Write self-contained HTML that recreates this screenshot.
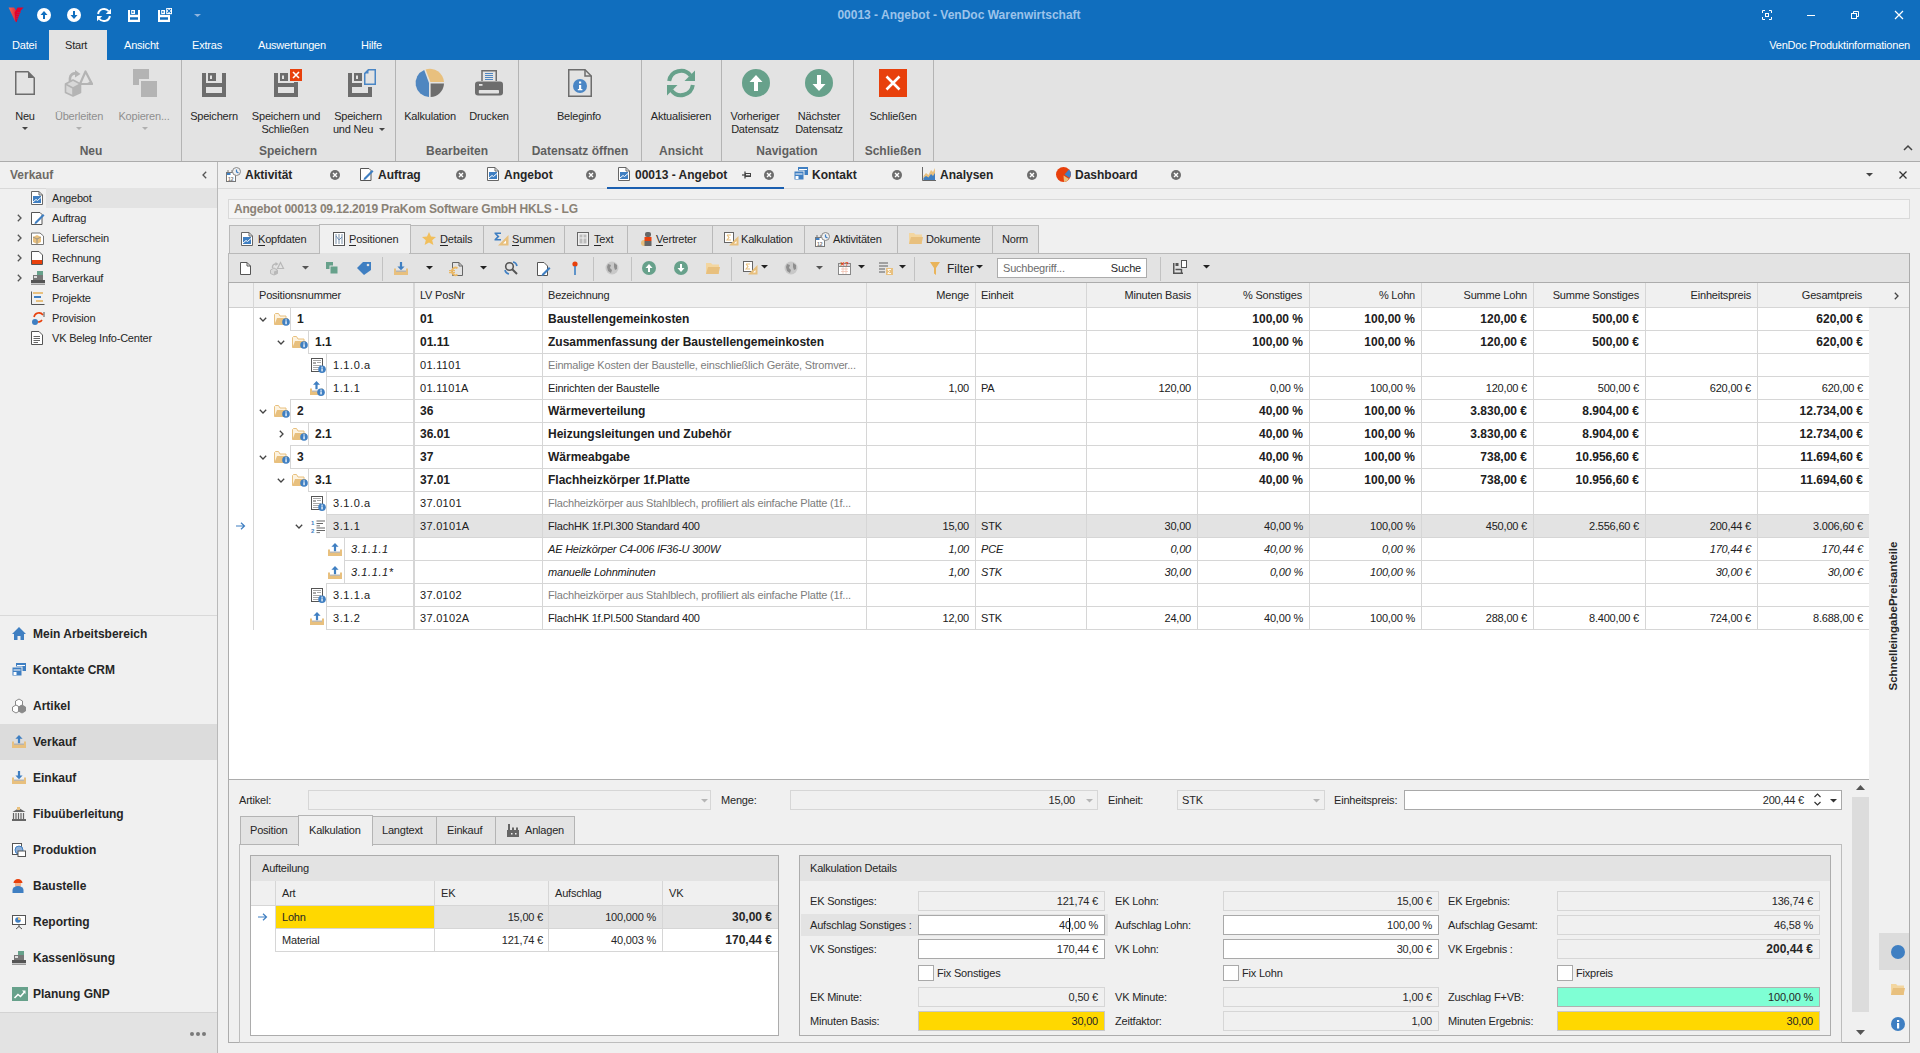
<!DOCTYPE html>
<html><head><meta charset="utf-8"><title>VenDoc</title>
<style>
html,body{margin:0;padding:0}
body{width:1920px;height:1053px;position:relative;overflow:hidden;background:#f0f0f0;font-family:"Liberation Sans",sans-serif;font-size:11px;color:#202020}
.a{position:absolute}
.t{position:absolute;white-space:nowrap}
svg{overflow:visible}
</style></head><body>
<div class="a" style="left:0px;top:0px;width:1920px;height:60px;background:#106ebe;"></div>
<svg class="a" style="left:0px;top:0px" width="30" height="30" viewBox="0 0 30 30"><defs><linearGradient id="vg" x1="0" y1="0" x2="1" y2="0"><stop offset="0" stop-color="#f26a55"/><stop offset="1" stop-color="#e2283a"/></linearGradient></defs><path d="M8.6 7.6 L14.2 7.4 L16.2 11.2 L15.5 22.2 Z" fill="url(#vg)"/><path d="M17.6 7.6 L23.6 7.6 L20.8 10.6 L16.5 22.2 L15.6 21.5 L14.6 12.5 Z" fill="#e4002b"/><path d="M17 12.5 H21 M16.5 14.5 H20 M16 16.5 H19 M15.8 18.5 H18.3" stroke="#b0245a" stroke-width="0.8"/></svg>
<svg class="a" style="left:37px;top:8px" width="14" height="14" viewBox="0 0 14 14"><circle cx="7" cy="7" r="7" fill="#fff"/><path d="M7 3 L10.5 7 L8 7 L8 11 L6 11 L6 7 L3.5 7 Z" fill="#106ebe"/></svg>
<svg class="a" style="left:67px;top:8px" width="14" height="14" viewBox="0 0 14 14"><circle cx="7" cy="7" r="7" fill="#fff"/><path d="M7 11 L10.5 7 L8 7 L8 3 L6 3 L6 7 L3.5 7 Z" fill="#106ebe"/></svg>
<svg class="a" style="left:97px;top:8px" width="14" height="14" viewBox="0 0 14 14"><path d="M1.1 6 A6 6 0 0 1 11.75 3.25" stroke="#fff" stroke-width="2" fill="none"/><path d="M8.75 6 L14 6 L14 0.75 Z" fill="#fff"/><path d="M12.9 8 A6 6 0 0 1 2.25 10.75" stroke="#fff" stroke-width="2" fill="none"/><path d="M5.25 8 L0 8 L0 13.25 Z" fill="#fff"/></svg>
<svg class="a" style="left:128px;top:10px" width="12" height="12" viewBox="0 0 12 12"><path d="M0 0 H2 V4.7 H10 V0 H12 V12 H0 Z M2 7.2 V9.8 H10 V7.2 Z" fill="#fff" fill-rule="evenodd"/><path d="M3.2 0 H7 V4 H3.2 Z M4.3 1 V3 H5.5 V1 Z" fill="#fff" fill-rule="evenodd"/></svg>
<svg class="a" style="left:158px;top:8px" width="15" height="14" viewBox="0 0 15 14"><g transform="translate(0,2)"><path d="M0 0 H2 V4.7 H10 V0 H12 V12 H0 Z M2 7.2 V9.8 H10 V7.2 Z" fill="#fff" fill-rule="evenodd"/><path d="M3.2 0 H7 V4 H3.2 Z M4.3 1 V3 H5.5 V1 Z" fill="#fff" fill-rule="evenodd"/></g><rect x="7.2" y="-0.5" width="7.5" height="7.5" fill="#106ebe"/><rect x="8.2" y="0" width="5.8" height="6.2" fill="#fff"/><path d="M9.4 1.2 L12.8 4.8 M12.8 1.2 L9.4 4.8" stroke="#106ebe" stroke-width="1.1"/></svg>
<svg class="a" style="left:194px;top:14px" width="7" height="3" viewBox="0 0 7 3"><path d="M0 0 H7 L3.5 3 Z" fill="#8db4de"/></svg>
<div class="t" style="top:7.84px;font-size:12px;line-height:14px;left:659px;width:600px;text-align:center;font-weight:bold;color:#9cc3ea;letter-spacing:0px;">00013 - Angebot - VenDoc Warenwirtschaft</div>
<svg class="a" style="left:1762px;top:10px" width="10" height="10" viewBox="0 0 10 10"><path d="M0.5 3 V0.5 H3 M7 0.5 H9.5 V3 M9.5 7 V9.5 H7 M3 9.5 H0.5 V7" stroke="#fff" fill="none"/><rect x="3.5" y="3.5" width="3" height="3" stroke="#fff" fill="none"/></svg>
<div class="a" style="left:1807px;top:15px;width:8px;height:1px;background:#fff"></div>
<svg class="a" style="left:1851px;top:11px" width="8" height="8" viewBox="0 0 8 8"><rect x="0.5" y="2.5" width="5" height="5" stroke="#fff" fill="none"/><path d="M2.5 2.5 V0.5 H7.5 V5.5 H5.5" stroke="#fff" fill="none"/></svg>
<svg class="a" style="left:1895px;top:11px" width="8" height="8" viewBox="0 0 8 8"><path d="M0 0 L8 8 M8 0 L0 8" stroke="#fff" stroke-width="1.2"/></svg>
<div class="a" style="left:49px;top:30px;width:58px;height:30px;background:#e3e3e3;"></div>
<div class="t" style="top:38.69px;font-size:11px;line-height:13px;left:12px;color:#fff;letter-spacing:-0.2px;">Datei</div>
<div class="t" style="top:38.69px;font-size:11px;line-height:13px;left:65px;color:#262626;letter-spacing:-0.2px;">Start</div>
<div class="t" style="top:38.69px;font-size:11px;line-height:13px;left:124px;color:#fff;letter-spacing:-0.2px;">Ansicht</div>
<div class="t" style="top:38.69px;font-size:11px;line-height:13px;left:192px;color:#fff;letter-spacing:-0.2px;">Extras</div>
<div class="t" style="top:38.69px;font-size:11px;line-height:13px;left:258px;color:#fff;letter-spacing:-0.2px;">Auswertungen</div>
<div class="t" style="top:38.69px;font-size:11px;line-height:13px;left:361px;color:#fff;letter-spacing:-0.2px;">Hilfe</div>
<div class="t" style="top:38.69px;font-size:11px;line-height:13px;right:10px;color:#fff;letter-spacing:-0.2px;">VenDoc Produktinformationen</div>
<div class="a" style="left:0px;top:60px;width:1920px;height:101px;background:#e3e3e3;"></div>
<div class="a" style="left:0px;top:161px;width:1920px;height:1px;background:#acacac"></div>
<div class="a" style="left:181px;top:60px;width:1px;height:101px;background:#b4b4b4"></div>
<div class="a" style="left:395px;top:60px;width:1px;height:101px;background:#b4b4b4"></div>
<div class="a" style="left:518px;top:60px;width:1px;height:101px;background:#b4b4b4"></div>
<div class="a" style="left:641px;top:60px;width:1px;height:101px;background:#b4b4b4"></div>
<div class="a" style="left:721px;top:60px;width:1px;height:101px;background:#b4b4b4"></div>
<div class="a" style="left:853px;top:60px;width:1px;height:101px;background:#b4b4b4"></div>
<div class="a" style="left:933px;top:60px;width:1px;height:101px;background:#b4b4b4"></div>
<svg class="a" style="left:15px;top:71px" width="20" height="24" viewBox="0 0 20 24"><path d="M0.75 0.75 H13 L19.25 7 V23.25 H0.75 Z" fill="none" stroke="#6d6d6d" stroke-width="1.5"/><path d="M13 0.75 V7 H19.25 Z" fill="#6d6d6d"/></svg>
<div class="t" style="top:109.69px;font-size:11px;line-height:13px;left:-275px;width:600px;text-align:center;color:#262626;letter-spacing:-0.2px;">Neu</div>
<svg class="a" style="left:22px;top:127px" width="6" height="3" viewBox="0 0 6 3"><path d="M0 0 H6 L3 3 Z" fill="#444"/></svg>
<svg class="a" style="left:65px;top:70px" width="28" height="26" viewBox="0 0 28 26"><path d="M8 10 L15.5 14 V22.5 L8 26 L0.5 22.5 V14 Z" fill="#d8d8d8" stroke="#b4b4b4" stroke-width="1.6" stroke-linejoin="round"/><path d="M0.8 14.2 L8 18 L15.2 14.2 M8 18 V25.5" stroke="#b4b4b4" stroke-width="1.6" fill="none"/><path d="M8 18 L15.2 14.2 V22.3 L8 25.7 Z" fill="#b4b4b4"/><path d="M20.5 1.5 L27 14 H15 Z" fill="#e3e3e3" stroke="#b4b4b4" stroke-width="2.2" stroke-linejoin="round"/><path d="M19 14.5 H28 L26.5 11 Z" fill="#b4b4b4"/><path d="M5 11.5 V8 A5 5 0 0 1 11 3.5" stroke="#b4b4b4" stroke-width="2.6" fill="none"/><path d="M10 0 L15.5 4 L10 7.5 Z" fill="#b4b4b4"/></svg>
<div class="t" style="top:109.69px;font-size:11px;line-height:13px;left:-221px;width:600px;text-align:center;color:#8f8f8f;letter-spacing:-0.2px;">Überleiten</div>
<svg class="a" style="left:76px;top:127px" width="6" height="3" viewBox="0 0 6 3"><path d="M0 0 H6 L3 3 Z" fill="#b0b0b0"/></svg>
<div class="a" style="left:133px;top:69px;width:16px;height:16px;background:#b4b4b4;"></div>
<div class="a" style="left:139px;top:79px;width:18px;height:18px;background:#e3e3e3;"></div>
<div class="a" style="left:141px;top:81px;width:16px;height:16px;background:#b4b4b4;"></div>
<div class="t" style="top:109.69px;font-size:11px;line-height:13px;left:-156px;width:600px;text-align:center;color:#8f8f8f;letter-spacing:-0.2px;">Kopieren...</div>
<svg class="a" style="left:142px;top:127px" width="6" height="3" viewBox="0 0 6 3"><path d="M0 0 H6 L3 3 Z" fill="#b0b0b0"/></svg>
<div class="t" style="top:143.84px;font-size:12px;line-height:14px;left:-209px;width:600px;text-align:center;font-weight:bold;color:#5f5f5f;letter-spacing:0px;">Neu</div>
<svg class="a" style="left:202px;top:73px" width="24" height="24" viewBox="0 0 24 24"><path d="M0 0 H4 V10 H20 V0 H24 V24 H0 Z M4 14 V20 H20 V14 Z" fill="#6d6d6d" fill-rule="evenodd"/><path d="M6 0 H14 V8 H6 Z M8 2.5 V6 H10 V2.5 Z" fill="#6d6d6d" fill-rule="evenodd"/></svg>
<div class="t" style="top:109.69px;font-size:11px;line-height:13px;left:-86px;width:600px;text-align:center;color:#262626;letter-spacing:-0.2px;">Speichern</div>
<svg class="a" style="left:274px;top:69px" width="30" height="28" viewBox="0 0 30 28"><g transform="translate(0,4)"><path d="M0 0 H4 V10 H20 V0 H24 V24 H0 Z M4 14 V20 H20 V14 Z" fill="#6d6d6d" fill-rule="evenodd"/><path d="M6 0 H14 V8 H6 Z M8 2.5 V6 H10 V2.5 Z" fill="#6d6d6d" fill-rule="evenodd"/></g><rect x="15" y="-1" width="14" height="14" fill="#e3e3e3"/><rect x="16" y="0" width="12" height="12" fill="#e8400c"/><path d="M19 3 L25 9 M25 3 L19 9" stroke="#fff" stroke-width="1.6"/></svg>
<div class="t" style="top:109.69px;font-size:11px;line-height:13px;left:-14px;width:600px;text-align:center;color:#262626;letter-spacing:-0.2px;">Speichern und</div>
<div class="t" style="top:122.69px;font-size:11px;line-height:13px;left:-15px;width:600px;text-align:center;color:#262626;letter-spacing:-0.2px;">Schließen</div>
<svg class="a" style="left:348px;top:69px" width="30" height="28" viewBox="0 0 30 28"><path d="M0 4 H4 V14 H14 V18 H4 V24 H20 V18 H24 V28 H0 Z" fill="#6d6d6d"/><path d="M6 4 H14 V12 H6 Z M8 6.5 V10 H10 V6.5 Z" fill="#6d6d6d" fill-rule="evenodd"/><path d="M16.75 4.5 L20.5 0.75 H27.25 V15.25 H16.75 Z" fill="#e3e3e3" stroke="#4a86c5" stroke-width="1.5"/><path d="M16 4.5 L20.5 0 V4.5 Z" fill="#4a86c5"/></svg>
<div class="t" style="top:109.69px;font-size:11px;line-height:13px;left:58px;width:600px;text-align:center;color:#262626;letter-spacing:-0.2px;">Speichern</div>
<div class="t" style="top:122.69px;font-size:11px;line-height:13px;left:53px;width:600px;text-align:center;color:#262626;letter-spacing:-0.2px;">und Neu</div>
<svg class="a" style="left:379px;top:128px" width="6" height="3" viewBox="0 0 6 3"><path d="M0 0 H6 L3 3 Z" fill="#444"/></svg>
<div class="t" style="top:143.84px;font-size:12px;line-height:14px;left:-12px;width:600px;text-align:center;font-weight:bold;color:#5f5f5f;letter-spacing:0px;">Speichern</div>
<svg class="a" style="left:416px;top:69px" width="28" height="28" viewBox="0 0 28 28"><path d="M13 28 L13 14 L8.2 1.1 A14 14 0 0 0 13 28 Z" fill="#4f86c0"/><path d="M9.6 0.5 A14 14 0 0 1 28 13 L14.4 13 Z" fill="#e8c07e"/><path d="M14.6 14.6 H28 A14 14 0 0 1 14.6 28 Z" fill="#6d6d6d"/></svg>
<div class="t" style="top:109.69px;font-size:11px;line-height:13px;left:130px;width:600px;text-align:center;color:#262626;letter-spacing:-0.2px;">Kalkulation</div>
<svg class="a" style="left:475px;top:70px" width="28" height="26" viewBox="0 0 28 26"><path d="M7 11 V0.75 H21.25 V11" fill="none" stroke="#6d6d6d" stroke-width="1.5"/><path d="M10 3.5 H18 M10 5.5 H18 M10 7.5 H18 M10 9.5 H18" stroke="#4f86c0" stroke-width="1"/><rect x="0" y="11.5" width="28" height="14" rx="3" fill="#6d6d6d"/><rect x="3.8" y="20" width="20.2" height="3.6" rx="0.8" fill="#e3e3e3"/><rect x="4" y="14" width="3.5" height="1.8" fill="#e3e3e3"/></svg>
<div class="t" style="top:109.69px;font-size:11px;line-height:13px;left:189px;width:600px;text-align:center;color:#262626;letter-spacing:-0.2px;">Drucken</div>
<div class="t" style="top:143.84px;font-size:12px;line-height:14px;left:157px;width:600px;text-align:center;font-weight:bold;color:#5f5f5f;letter-spacing:0px;">Bearbeiten</div>
<svg class="a" style="left:568px;top:69px" width="24" height="28" viewBox="0 0 24 28"><path d="M0.75 0.75 H17 L23.25 7 V27.25 H0.75 Z" fill="none" stroke="#6d6d6d" stroke-width="1.5"/><path d="M17 0.75 V7 H23.25" fill="none" stroke="#6d6d6d" stroke-width="1.5"/><circle cx="12" cy="17" r="7" fill="#4a86c5"/><rect x="11" y="16" width="2.2" height="5" fill="#fff"/><rect x="9.8" y="20" width="4.6" height="1.3" fill="#fff"/><rect x="11" y="12.5" width="2.2" height="2" fill="#fff"/></svg>
<div class="t" style="top:109.69px;font-size:11px;line-height:13px;left:279px;width:600px;text-align:center;color:#262626;letter-spacing:-0.2px;">Beleginfo</div>
<div class="t" style="top:143.84px;font-size:12px;line-height:14px;left:280px;width:600px;text-align:center;font-weight:bold;color:#5f5f5f;letter-spacing:0px;">Datensatz öffnen</div>
<svg class="a" style="left:667px;top:69px" width="28" height="28" viewBox="0 0 28 28"><path d="M2.17 12 A12 12 0 0 1 23.5 6.5" stroke="#67a18b" stroke-width="4" fill="none"/><path d="M17.5 12 L28 12 L28 1.5 Z" fill="#67a18b"/><path d="M25.83 16 A12 12 0 0 1 4.5 21.5" stroke="#67a18b" stroke-width="4" fill="none"/><path d="M10.5 16 L0 16 L0 26.5 Z" fill="#67a18b"/></svg>
<div class="t" style="top:109.69px;font-size:11px;line-height:13px;left:381px;width:600px;text-align:center;color:#262626;letter-spacing:-0.2px;">Aktualisieren</div>
<div class="t" style="top:143.84px;font-size:12px;line-height:14px;left:381px;width:600px;text-align:center;font-weight:bold;color:#5f5f5f;letter-spacing:0px;">Ansicht</div>
<svg class="a" style="left:742px;top:69px" width="28" height="28" viewBox="0 0 28 28"><circle cx="14" cy="14" r="14" fill="#67a18b"/><path d="M14 6 L20.5 13 H16 V22 H12 V13 H7.5 Z" fill="#fff"/></svg>
<svg class="a" style="left:805px;top:69px" width="28" height="28" viewBox="0 0 28 28"><circle cx="14" cy="14" r="14" fill="#67a18b"/><path d="M14 22 L20.5 15 H16 V6 H12 V15 H7.5 Z" fill="#fff"/></svg>
<div class="t" style="top:109.69px;font-size:11px;line-height:13px;left:455px;width:600px;text-align:center;color:#262626;letter-spacing:-0.2px;">Vorheriger</div>
<div class="t" style="top:122.69px;font-size:11px;line-height:13px;left:455px;width:600px;text-align:center;color:#262626;letter-spacing:-0.2px;">Datensatz</div>
<div class="t" style="top:109.69px;font-size:11px;line-height:13px;left:519px;width:600px;text-align:center;color:#262626;letter-spacing:-0.2px;">Nächster</div>
<div class="t" style="top:122.69px;font-size:11px;line-height:13px;left:519px;width:600px;text-align:center;color:#262626;letter-spacing:-0.2px;">Datensatz</div>
<div class="t" style="top:143.84px;font-size:12px;line-height:14px;left:487px;width:600px;text-align:center;font-weight:bold;color:#5f5f5f;letter-spacing:0px;">Navigation</div>
<svg class="a" style="left:879px;top:69px" width="28" height="28" viewBox="0 0 28 28"><rect width="28" height="28" fill="#e8400c"/><path d="M7.5 7.5 L20.5 20.5 M20.5 7.5 L7.5 20.5" stroke="#fff" stroke-width="2.6"/></svg>
<div class="t" style="top:109.69px;font-size:11px;line-height:13px;left:593px;width:600px;text-align:center;color:#262626;letter-spacing:-0.2px;">Schließen</div>
<div class="t" style="top:143.84px;font-size:12px;line-height:14px;left:593px;width:600px;text-align:center;font-weight:bold;color:#5f5f5f;letter-spacing:0px;">Schließen</div>
<svg class="a" style="left:1903px;top:145px" width="10" height="6" viewBox="0 0 10 6"><path d="M1 5 L5 1 L9 5" stroke="#444" stroke-width="1.5" fill="none"/></svg>
<div class="a" style="left:217px;top:162px;width:1px;height:891px;background:#b9b9b9"></div>
<div class="t" style="top:167.84px;font-size:12px;line-height:14px;left:10px;font-weight:bold;color:#6e6a66;letter-spacing:0px;">Verkauf</div>
<svg class="a" style="left:202px;top:171px" width="5" height="8" viewBox="0 0 5 8"><path d="M4.2 0.8 L1 4 L4.2 7.2" stroke="#555" stroke-width="1.3" fill="none"/></svg>
<div class="a" style="left:0px;top:188px;width:217px;height:1px;background:#d9d9d9"></div>
<div class="a" style="left:46px;top:188px;width:171px;height:20px;background:#e3e3e3;"></div>
<svg class="a" style="left:31px;top:191px" width="12" height="14" viewBox="0 0 12 14"><path d="M0.5 0.5 H8 L11.5 4 V13.5 H0.5 Z" fill="#fff" stroke="#666"/><path d="M8 0.5 V4 H11.5" fill="none" stroke="#666"/><rect x="2" y="5" width="8" height="7" fill="#3f7fc2"/><path d="M2 11 L5 8.5 L6.5 9.5 L10 6.5" stroke="#fff" stroke-width="1" fill="none"/></svg>
<div class="t" style="top:191.69px;font-size:11px;line-height:13px;left:52px;color:#262626;letter-spacing:-0.2px;">Angebot</div>
<svg class="a" style="left:31px;top:211px" width="14" height="14" viewBox="0 0 14 14"><path d="M0.5 1.5 H9 L11 3.5 V13.5 H0.5 Z" fill="#fff" stroke="#555"/><path d="M4 11 L12 3 L13.5 4.5 L5.5 12.5 L3.5 13 Z" fill="#3f7fc2"/></svg>
<svg class="a" style="left:17px;top:214px" width="5" height="8" viewBox="0 0 5 8"><path d="M0.8 0.8 L4 4 L0.8 7.2" stroke="#555" stroke-width="1.3" fill="none"/></svg>
<div class="t" style="top:211.69px;font-size:11px;line-height:13px;left:52px;color:#262626;letter-spacing:-0.2px;">Auftrag</div>
<svg class="a" style="left:31px;top:231px" width="13" height="14" viewBox="0 0 13 14"><path d="M0.5 2 H9 L12.5 5 V13.5 H0.5 Z" fill="#fff" stroke="#777"/><path d="M2 6 L6 4 L10 6 V11 L6 13 L2 11 Z" fill="#e8c07e"/><path d="M2 6 L6 8 L10 6 M6 8 V13" stroke="#888" stroke-width="0.8" fill="none"/></svg>
<svg class="a" style="left:17px;top:234px" width="5" height="8" viewBox="0 0 5 8"><path d="M0.8 0.8 L4 4 L0.8 7.2" stroke="#555" stroke-width="1.3" fill="none"/></svg>
<div class="t" style="top:231.69px;font-size:11px;line-height:13px;left:52px;color:#262626;letter-spacing:-0.2px;">Lieferschein</div>
<svg class="a" style="left:31px;top:251px" width="12" height="14" viewBox="0 0 12 14"><path d="M0.5 0.5 H8 L11.5 4 V13.5 H0.5 Z" fill="#fff" stroke="#555"/><rect x="1" y="9" width="10" height="4" fill="#e8400c"/></svg>
<svg class="a" style="left:17px;top:254px" width="5" height="8" viewBox="0 0 5 8"><path d="M0.8 0.8 L4 4 L0.8 7.2" stroke="#555" stroke-width="1.3" fill="none"/></svg>
<div class="t" style="top:251.69px;font-size:11px;line-height:13px;left:52px;color:#262626;letter-spacing:-0.2px;">Rechnung</div>
<svg class="a" style="left:31px;top:271px" width="14" height="14" viewBox="0 0 14 14"><rect x="6" y="0" width="6" height="5" fill="#67a18b"/><rect x="2" y="4" width="10" height="5" fill="#777"/><rect x="3" y="5" width="3" height="2" fill="#ddd"/><rect x="0" y="9" width="14" height="3" fill="#555"/><rect x="0" y="12.5" width="14" height="1.5" fill="#999"/></svg>
<svg class="a" style="left:17px;top:274px" width="5" height="8" viewBox="0 0 5 8"><path d="M0.8 0.8 L4 4 L0.8 7.2" stroke="#555" stroke-width="1.3" fill="none"/></svg>
<div class="t" style="top:271.69px;font-size:11px;line-height:13px;left:52px;color:#262626;letter-spacing:-0.2px;">Barverkauf</div>
<svg class="a" style="left:31px;top:291px" width="14" height="14" viewBox="0 0 14 14"><path d="M0.5 0.5 V13.5 H13.5" stroke="#555" fill="none"/><rect x="2" y="1" width="10" height="2" fill="#e8c07e"/><rect x="3" y="5" width="7" height="2" fill="#3f7fc2"/><rect x="5" y="9" width="7" height="2" fill="#e8c07e"/></svg>
<div class="t" style="top:291.69px;font-size:11px;line-height:13px;left:52px;color:#262626;letter-spacing:-0.2px;">Projekte</div>
<svg class="a" style="left:31px;top:311px" width="14" height="14" viewBox="0 0 14 14"><path d="M3 6 A5 5 0 0 1 12 4" stroke="#e8400c" stroke-width="1.6" fill="none"/><path d="M5 10 A4 4 0 0 0 11 9" stroke="#e8400c" stroke-width="1.6" fill="none"/><circle cx="4" cy="11" r="3" fill="#3f7fc2"/><path d="M13 1 V6" stroke="#555"/></svg>
<div class="t" style="top:311.69px;font-size:11px;line-height:13px;left:52px;color:#262626;letter-spacing:-0.2px;">Provision</div>
<svg class="a" style="left:31px;top:331px" width="12" height="14" viewBox="0 0 12 14"><path d="M0.5 0.5 H8 L11.5 4 V13.5 H0.5 Z" fill="#fff" stroke="#555"/><path d="M2.5 5.5 H9 M2.5 7.5 H9 M2.5 9.5 H9 M2.5 11.5 H7" stroke="#555" stroke-width="0.9"/></svg>
<div class="t" style="top:331.69px;font-size:11px;line-height:13px;left:52px;color:#262626;letter-spacing:-0.2px;">VK Beleg Info-Center</div>
<div class="a" style="left:0px;top:615px;width:217px;height:1px;background:#d9d9d9"></div>
<div class="a" style="left:0px;top:724px;width:217px;height:36px;background:#dcdcdc;"></div>
<svg class="a" style="left:12px;top:627px" width="14" height="13" viewBox="0 0 14 13"><path d="M7 0 L14 7 H12 V13 H8.5 V9 H5.5 V13 H2 V7 H0 Z" fill="#3f7fc2"/></svg>
<div class="t" style="top:626.84px;font-size:12px;line-height:14px;left:33px;font-weight:bold;color:#262626;letter-spacing:0px;">Mein Arbeitsbereich</div>
<svg class="a" style="left:12px;top:663px" width="14" height="13" viewBox="0 0 14 13"><rect x="4" y="0" width="10" height="8" fill="#3f7fc2"/><rect x="5" y="2" width="8" height="1" fill="#fff"/><rect x="0" y="4" width="10" height="9" fill="#3f7fc2" stroke="#f0f0f0" stroke-width="1"/><rect x="1.5" y="6.5" width="7" height="1" fill="#fff"/><rect x="1.5" y="9" width="3" height="3" fill="#fff"/></svg>
<div class="t" style="top:662.84px;font-size:12px;line-height:14px;left:33px;font-weight:bold;color:#262626;letter-spacing:0px;">Kontakte CRM</div>
<svg class="a" style="left:12px;top:699px" width="14" height="14" viewBox="0 0 14 14"><path d="M4 0 L7.5 2 V6 L4 8 L0.5 6 V2 Z" fill="#fff" stroke="#8a8a8a" transform="translate(3,0)"/><path d="M4 0 L7.5 2 V6 L4 8 L0.5 6 V2 Z" fill="#fff" stroke="#8a8a8a" transform="translate(0,6)"/><path d="M4 0 L7.5 2 V6 L4 8 L0.5 6 V2 Z" fill="#8a8a8a" stroke="#8a8a8a" transform="translate(6,6)"/></svg>
<div class="t" style="top:698.84px;font-size:12px;line-height:14px;left:33px;font-weight:bold;color:#262626;letter-spacing:0px;">Artikel</div>
<svg class="a" style="left:12px;top:735px" width="14" height="13" viewBox="0 0 14 13"><path d="M7 0 L10.6 3.8 H8.1 V8.2 H5.9 V3.8 H3.4 Z" fill="#3f7fc2"/><path d="M0 6.5 H2 V9.5 H12 V6.5 H14 V13 H0 Z" fill="#e8c07e"/><rect x="2" y="8.6" width="10" height="1.1" fill="#a8a8a8"/></svg>
<div class="t" style="top:734.84px;font-size:12px;line-height:14px;left:33px;font-weight:bold;color:#262626;letter-spacing:0px;">Verkauf</div>
<svg class="a" style="left:12px;top:771px" width="14" height="13" viewBox="0 0 14 13"><path d="M7 8.2 L10.6 4.4 H8.1 V0 H5.9 V4.4 H3.4 Z" fill="#3f7fc2"/><path d="M0 6.5 H2 V9.5 H12 V6.5 H14 V13 H0 Z" fill="#e8c07e"/><rect x="2" y="8.6" width="10" height="1.1" fill="#a8a8a8"/></svg>
<div class="t" style="top:770.84px;font-size:12px;line-height:14px;left:33px;font-weight:bold;color:#262626;letter-spacing:0px;">Einkauf</div>
<svg class="a" style="left:12px;top:807px" width="14" height="14" viewBox="0 0 14 14"><path d="M7 1 L13.5 5 H0.5 Z" fill="#666"/><path d="M1.5 6 V12 M4 6 V12 M6.5 6 V12 M9 6 V12 M11.5 6 V12" stroke="#666" stroke-width="1.2"/><rect x="0" y="12" width="14" height="2" fill="#666"/><rect x="5" y="0" width="3" height="3" fill="#e8c07e"/></svg>
<div class="t" style="top:806.84px;font-size:12px;line-height:14px;left:33px;font-weight:bold;color:#262626;letter-spacing:0px;">Fibuüberleitung</div>
<svg class="a" style="left:12px;top:843px" width="14" height="14" viewBox="0 0 14 14"><rect x="0.5" y="0.5" width="9" height="11" fill="#fff" stroke="#555"/><circle cx="7" cy="7" r="4" fill="#8fb0d8" stroke="#3f7fc2"/><rect x="6" y="8" width="7.5" height="5.5" fill="#fff" stroke="#555"/></svg>
<div class="t" style="top:842.84px;font-size:12px;line-height:14px;left:33px;font-weight:bold;color:#262626;letter-spacing:0px;">Produktion</div>
<svg class="a" style="left:12px;top:879px" width="12" height="14" viewBox="0 0 12 14"><circle cx="6" cy="5" r="3.2" fill="#f2b38f"/><path d="M1.5 4 A4.5 4 0 0 1 10.5 4 Z" fill="#e8400c"/><path d="M0.5 14 V11 A5.5 4 0 0 1 11.5 11 V14 Z" fill="#3f7fc2"/></svg>
<div class="t" style="top:878.84px;font-size:12px;line-height:14px;left:33px;font-weight:bold;color:#262626;letter-spacing:0px;">Baustelle</div>
<svg class="a" style="left:12px;top:915px" width="14" height="14" viewBox="0 0 14 14"><rect x="0.5" y="0.5" width="13" height="9" fill="#fff" stroke="#555"/><circle cx="6" cy="5" r="2.8" fill="#3f7fc2"/><path d="M6 5 V2.2 A2.8 2.8 0 0 1 8.8 5 Z" fill="#e8c07e"/><path d="M7 10 V12 M4 14 L7 11.5 L10 14" stroke="#555" fill="none"/></svg>
<div class="t" style="top:914.84px;font-size:12px;line-height:14px;left:33px;font-weight:bold;color:#262626;letter-spacing:0px;">Reporting</div>
<svg class="a" style="left:12px;top:951px" width="14" height="14" viewBox="0 0 14 14"><rect x="6" y="0" width="6" height="5" fill="#67a18b"/><rect x="2" y="4" width="10" height="5" fill="#777"/><rect x="3" y="5" width="3" height="2" fill="#ddd"/><rect x="0" y="9" width="14" height="3" fill="#555"/><rect x="0" y="12.5" width="14" height="1.5" fill="#999"/></svg>
<div class="t" style="top:950.84px;font-size:12px;line-height:14px;left:33px;font-weight:bold;color:#262626;letter-spacing:0px;">Kassenlösung</div>
<svg class="a" style="left:12px;top:987px" width="16" height="14" viewBox="0 0 16 14"><rect width="16" height="14" fill="#67a18b"/><path d="M2.5 11 L6 7.5 L8.5 9.5 L12.5 5" stroke="#fff" stroke-width="1.6" fill="none"/><path d="M10 3.5 H13.5 V7 Z" fill="#fff"/></svg>
<div class="t" style="top:986.84px;font-size:12px;line-height:14px;left:33px;font-weight:bold;color:#262626;letter-spacing:0px;">Planung GNP</div>
<div class="a" style="left:0px;top:1012px;width:217px;height:1px;background:#d3d3d3"></div>
<div class="a" style="left:0px;top:1013px;width:217px;height:40px;background:#e3e3e3;"></div>
<div class="a" style="left:189.5px;top:1031.5px;width:4px;height:4px;border-radius:50%;background:#7a7a7a"></div>
<div class="a" style="left:195.5px;top:1031.5px;width:4px;height:4px;border-radius:50%;background:#7a7a7a"></div>
<div class="a" style="left:201.5px;top:1031.5px;width:4px;height:4px;border-radius:50%;background:#7a7a7a"></div>
<div class="a" style="left:218px;top:188px;width:1702px;height:1px;background:#d9d9d9"></div>
<svg class="a" style="left:226px;top:167px" width="15" height="15" viewBox="0 0 15 15"><rect x="0.5" y="5.5" width="9" height="9" fill="#fff" stroke="#777"/><rect x="1" y="6" width="3.5" height="2" fill="#3f7fc2"/><path d="M2 3 V6 M6 3 V6" stroke="#777"/><text x="2" y="13.5" font-size="5" font-family="Liberation Sans" font-weight="bold" fill="#777">12</text><circle cx="10.5" cy="4.5" r="4" fill="#f0f0f0" stroke="#888"/><path d="M10.5 2.5 V4.8 L12.5 6" stroke="#3f7fc2" stroke-width="1.2" fill="none"/></svg>
<div class="t" style="top:167.84px;font-size:12px;line-height:14px;left:245px;font-weight:bold;color:#262626;letter-spacing:0px;">Aktivität</div>
<svg class="a" style="left:330px;top:170px" width="10" height="10" viewBox="0 0 10 10"><circle cx="5" cy="5" r="5" fill="#6d6d6d"/><path d="M3 3 L7 7 M7 3 L3 7" stroke="#fff" stroke-width="1.4"/></svg>
<svg class="a" style="left:360px;top:167px" width="14" height="14" viewBox="0 0 14 14"><path d="M0.5 1.5 H9 L11 3.5 V13.5 H0.5 Z" fill="#fff" stroke="#555"/><path d="M4 11 L12 3 L13.5 4.5 L5.5 12.5 L3.5 13 Z" fill="#3f7fc2"/></svg>
<div class="t" style="top:167.84px;font-size:12px;line-height:14px;left:378px;font-weight:bold;color:#262626;letter-spacing:0px;">Auftrag</div>
<svg class="a" style="left:456px;top:170px" width="10" height="10" viewBox="0 0 10 10"><circle cx="5" cy="5" r="5" fill="#6d6d6d"/><path d="M3 3 L7 7 M7 3 L3 7" stroke="#fff" stroke-width="1.4"/></svg>
<svg class="a" style="left:487px;top:167px" width="12" height="14" viewBox="0 0 12 14"><path d="M0.5 0.5 H8 L11.5 4 V13.5 H0.5 Z" fill="#fff" stroke="#666"/><path d="M8 0.5 V4 H11.5" fill="none" stroke="#666"/><rect x="2" y="5" width="8" height="7" fill="#3f7fc2"/><path d="M2 11 L5 8.5 L6.5 9.5 L10 6.5" stroke="#fff" stroke-width="1" fill="none"/></svg>
<div class="t" style="top:167.84px;font-size:12px;line-height:14px;left:504px;font-weight:bold;color:#262626;letter-spacing:0px;">Angebot</div>
<svg class="a" style="left:586px;top:170px" width="10" height="10" viewBox="0 0 10 10"><circle cx="5" cy="5" r="5" fill="#6d6d6d"/><path d="M3 3 L7 7 M7 3 L3 7" stroke="#fff" stroke-width="1.4"/></svg>
<svg class="a" style="left:618px;top:167px" width="12" height="14" viewBox="0 0 12 14"><path d="M0.5 0.5 H8 L11.5 4 V13.5 H0.5 Z" fill="#fff" stroke="#666"/><path d="M8 0.5 V4 H11.5" fill="none" stroke="#666"/><rect x="2" y="5" width="8" height="7" fill="#3f7fc2"/><path d="M2 11 L5 8.5 L6.5 9.5 L10 6.5" stroke="#fff" stroke-width="1" fill="none"/></svg>
<div class="t" style="top:167.84px;font-size:12px;line-height:14px;left:635px;font-weight:bold;color:#262626;letter-spacing:0px;">00013 - Angebot</div>
<svg class="a" style="left:764px;top:170px" width="10" height="10" viewBox="0 0 10 10"><circle cx="5" cy="5" r="5" fill="#6d6d6d"/><path d="M3 3 L7 7 M7 3 L3 7" stroke="#fff" stroke-width="1.4"/></svg>
<svg class="a" style="left:794px;top:167px" width="14" height="13" viewBox="0 0 14 13"><rect x="4" y="0" width="10" height="8" fill="#3f7fc2"/><rect x="5" y="2" width="8" height="1" fill="#fff"/><rect x="0" y="4" width="10" height="9" fill="#3f7fc2" stroke="#f0f0f0" stroke-width="1"/><rect x="1.5" y="6.5" width="7" height="1" fill="#fff"/><rect x="1.5" y="9" width="3" height="3" fill="#fff"/></svg>
<div class="t" style="top:167.84px;font-size:12px;line-height:14px;left:812px;font-weight:bold;color:#262626;letter-spacing:0px;">Kontakt</div>
<svg class="a" style="left:892px;top:170px" width="10" height="10" viewBox="0 0 10 10"><circle cx="5" cy="5" r="5" fill="#6d6d6d"/><path d="M3 3 L7 7 M7 3 L3 7" stroke="#fff" stroke-width="1.4"/></svg>
<svg class="a" style="left:922px;top:167px" width="14" height="14" viewBox="0 0 14 14"><path d="M0.5 0 V13.5 H14" stroke="#666" fill="none"/><path d="M1.5 13 V9 L4 6 L6.5 8 L9 3 L11 5 L13 1 V13 Z" fill="#e8c07e"/><path d="M1.5 13 V11 L4 9 L6.5 10.5 L9 7 L11 9 L13 6 V13 Z" fill="#3f7fc2"/></svg>
<div class="t" style="top:167.84px;font-size:12px;line-height:14px;left:940px;font-weight:bold;color:#262626;letter-spacing:0px;">Analysen</div>
<svg class="a" style="left:1027px;top:170px" width="10" height="10" viewBox="0 0 10 10"><circle cx="5" cy="5" r="5" fill="#6d6d6d"/><path d="M3 3 L7 7 M7 3 L3 7" stroke="#fff" stroke-width="1.4"/></svg>
<svg class="a" style="left:1056px;top:167px" width="15" height="15" viewBox="0 0 15 15"><circle cx="7.5" cy="7.5" r="7.5" fill="#e8400c"/><path d="M8.5 7.5 L13 2.5 A7 7 0 0 1 13.5 11 Z" fill="#3f7fc2"/><path d="M7.5 8.5 L13 12 A7 7 0 0 1 8 15 Z" fill="#e8c07e"/></svg>
<div class="t" style="top:167.84px;font-size:12px;line-height:14px;left:1075px;font-weight:bold;color:#262626;letter-spacing:0px;">Dashboard</div>
<svg class="a" style="left:1171px;top:170px" width="10" height="10" viewBox="0 0 10 10"><circle cx="5" cy="5" r="5" fill="#6d6d6d"/><path d="M3 3 L7 7 M7 3 L3 7" stroke="#fff" stroke-width="1.4"/></svg>
<svg class="a" style="left:742px;top:171px" width="10" height="8" viewBox="0 0 10 8"><path d="M0 4 H3" stroke="#444" stroke-width="1.2"/><path d="M3 0.5 V7.5" stroke="#444" stroke-width="1.3"/><rect x="3" y="2" width="6" height="4" fill="#444"/><rect x="4" y="3" width="4" height="1.3" fill="#f0f0f0"/></svg>
<div class="a" style="left:607px;top:187px;width:177px;height:2px;background:#1b5fb0"></div>
<svg class="a" style="left:1866px;top:173px" width="7" height="4" viewBox="0 0 7 4"><path d="M0 0 H7 L3.5 3.5 Z" fill="#444"/></svg>
<svg class="a" style="left:1899px;top:171px" width="8" height="8" viewBox="0 0 8 8"><path d="M0.5 0.5 L7.5 7.5 M7.5 0.5 L0.5 7.5" stroke="#333" stroke-width="1.3"/></svg>
<div class="a" style="left:228px;top:199px;width:1682px;height:20px;background:#f4f4f4;box-sizing:border-box;border:1px solid #d9d9d9;"></div>
<div class="t" style="top:201.84px;font-size:12px;line-height:14px;left:234px;font-weight:bold;color:#8a8276;letter-spacing:-0.2px;">Angebot 00013 09.12.2019 PraKom Software GmbH HKLS - LG</div>
<div class="a" style="left:229px;top:225px;width:91px;height:29px;background:#e3e3e3;box-sizing:border-box;border:1px solid #b9b9b9;"></div>
<svg class="a" style="left:241px;top:232px" width="12" height="14" viewBox="0 0 12 14"><path d="M0.5 0.5 H8 L11.5 4 V13.5 H0.5 Z" fill="#fff" stroke="#666"/><path d="M8 0.5 V4 H11.5" fill="none" stroke="#666"/><rect x="2" y="5" width="8" height="7" fill="#3f7fc2"/><path d="M2 11 L5 8.5 L6.5 9.5 L10 6.5" stroke="#fff" stroke-width="1" fill="none"/></svg>
<div class="t" style="top:232.69px;font-size:11px;line-height:13px;left:258px;color:#262626;letter-spacing:-0.2px;">Kopfdaten</div>
<div class="a" style="left:319px;top:224px;width:92px;height:29px;background:#f0f0f0;box-sizing:border-box;border:1px solid #b9b9b9;border-bottom:none;"></div>
<svg class="a" style="left:333px;top:232px" width="12" height="14" viewBox="0 0 12 14"><rect x="0.5" y="0.5" width="11" height="13" fill="#fff" stroke="#555"/><path d="M3 2 V12 M6 2 V12 M9 2 V12" stroke="#9ab" stroke-width="1.3"/><path d="M3 4 L6 8 L9 5" stroke="#6d8fb8" fill="none"/></svg>
<div class="t" style="top:232.69px;font-size:11px;line-height:13px;left:349px;color:#262626;letter-spacing:-0.2px;">Positionen</div>
<div class="a" style="left:410px;top:225px;width:74px;height:29px;background:#e3e3e3;box-sizing:border-box;border:1px solid #b9b9b9;"></div>
<svg class="a" style="left:422px;top:232px" width="14" height="13" viewBox="0 0 14 13"><path d="M7 0 L9 4.6 L14 5 L10.2 8.2 L11.4 13 L7 10.4 L2.6 13 L3.8 8.2 L0 5 L5 4.6 Z" fill="#f1bf5c"/></svg>
<div class="t" style="top:232.69px;font-size:11px;line-height:13px;left:440px;color:#262626;letter-spacing:-0.2px;">Details</div>
<div class="a" style="left:483px;top:225px;width:82px;height:29px;background:#e3e3e3;box-sizing:border-box;border:1px solid #b9b9b9;"></div>
<svg class="a" style="left:494px;top:232px" width="15" height="14" viewBox="0 0 15 14"><path d="M0.5 0.5 H7 V2 H3 L5.5 4.5 L3 7 H7 V8.5 H0.5 V7.2 L3.2 4.5 L0.5 1.8 Z" fill="#3f7fc2"/><path d="M14.5 3 V13.5 H4 Z" fill="#e8c07e"/><path d="M12 8.5 V11.5 H9 Z" fill="#fff"/></svg>
<div class="t" style="top:232.69px;font-size:11px;line-height:13px;left:512px;color:#262626;letter-spacing:-0.2px;">Summen</div>
<div class="a" style="left:564px;top:225px;width:64px;height:29px;background:#e3e3e3;box-sizing:border-box;border:1px solid #b9b9b9;"></div>
<svg class="a" style="left:577px;top:232px" width="12" height="14" viewBox="0 0 12 14"><rect x="0.5" y="0.5" width="11" height="13" fill="#f0f0f0" stroke="#666"/><rect x="2.5" y="2.5" width="7" height="9" fill="#bbb"/><path d="M6 2.5 V11.5 M2.5 6 H9.5" stroke="#f0f0f0"/></svg>
<div class="t" style="top:232.69px;font-size:11px;line-height:13px;left:594px;color:#262626;letter-spacing:-0.2px;">Text</div>
<div class="a" style="left:627px;top:225px;width:86px;height:29px;background:#e3e3e3;box-sizing:border-box;border:1px solid #b9b9b9;"></div>
<svg class="a" style="left:639px;top:232px" width="14" height="15" viewBox="0 0 14 15"><circle cx="5" cy="11" r="3" fill="#e8c07e"/><rect x="6" y="0" width="6" height="5" rx="2" fill="#666"/><rect x="5.5" y="5" width="7" height="4" fill="#e8400c"/><rect x="5.5" y="9" width="7" height="5" fill="#666"/></svg>
<div class="t" style="top:232.69px;font-size:11px;line-height:13px;left:656px;color:#262626;letter-spacing:-0.2px;">Vertreter</div>
<div class="a" style="left:712px;top:225px;width:93px;height:29px;background:#e3e3e3;box-sizing:border-box;border:1px solid #b9b9b9;"></div>
<svg class="a" style="left:724px;top:232px" width="15" height="14" viewBox="0 0 15 14"><rect x="0.5" y="0.5" width="9" height="10" fill="#fff" stroke="#666"/><path d="M3 3 H7 M3 3 L5 5.5 L3 8 H7" stroke="#e8c07e" fill="none" stroke-width="1.1"/><path d="M14.5 4 V13.5 H5 Z" fill="#e8c07e"/><path d="M12.5 9 V11.5 H10 Z" fill="#fff"/></svg>
<div class="t" style="top:232.69px;font-size:11px;line-height:13px;left:741px;color:#262626;letter-spacing:-0.2px;">Kalkulation</div>
<div class="a" style="left:804px;top:225px;width:94px;height:29px;background:#e3e3e3;box-sizing:border-box;border:1px solid #b9b9b9;"></div>
<svg class="a" style="left:815px;top:232px" width="15" height="15" viewBox="0 0 15 15"><rect x="0.5" y="5.5" width="9" height="9" fill="#fff" stroke="#777"/><rect x="1" y="6" width="3.5" height="2" fill="#3f7fc2"/><path d="M2 3 V6 M6 3 V6" stroke="#777"/><text x="2" y="13.5" font-size="5" font-family="Liberation Sans" font-weight="bold" fill="#777">12</text><circle cx="10.5" cy="4.5" r="4" fill="#f0f0f0" stroke="#888"/><path d="M10.5 2.5 V4.8 L12.5 6" stroke="#3f7fc2" stroke-width="1.2" fill="none"/></svg>
<div class="t" style="top:232.69px;font-size:11px;line-height:13px;left:833px;color:#262626;letter-spacing:-0.2px;">Aktivitäten</div>
<div class="a" style="left:897px;top:225px;width:96px;height:29px;background:#e3e3e3;box-sizing:border-box;border:1px solid #b9b9b9;"></div>
<svg class="a" style="left:909px;top:232px" width="14" height="12" viewBox="0 0 14 12"><path d="M0 1 H5 L6.5 2.5 H13 V12 H0 Z" fill="#f3d6a0"/><path d="M0 12 L2 5 H14 L12.5 12 Z" fill="#e8c07e"/></svg>
<div class="t" style="top:232.69px;font-size:11px;line-height:13px;left:926px;color:#262626;letter-spacing:-0.2px;">Dokumente</div>
<div class="a" style="left:992px;top:225px;width:47px;height:29px;background:#e3e3e3;box-sizing:border-box;border:1px solid #b9b9b9;"></div>
<div class="t" style="top:232.69px;font-size:11px;line-height:13px;left:1002px;color:#262626;letter-spacing:-0.2px;">Norm</div>
<div class="a" style="left:258px;top:245px;width:7px;height:1px;background:#262626"></div>
<div class="a" style="left:349px;top:245px;width:7px;height:1px;background:#262626"></div>
<div class="a" style="left:440px;top:245px;width:8px;height:1px;background:#262626"></div>
<div class="a" style="left:512px;top:245px;width:7px;height:1px;background:#262626"></div>
<div class="a" style="left:594px;top:245px;width:7px;height:1px;background:#262626"></div>
<div class="a" style="left:656px;top:245px;width:7px;height:1px;background:#262626"></div>
<div class="a" style="left:228px;top:253px;width:1682px;height:30px;background:#e3e3e3;box-sizing:border-box;border:1px solid #b9b9b9;border-bottom-color:#acacac;"></div>
<div class="a" style="left:320px;top:253px;width:89px;height:1px;background:#e3e3e3;"></div>
<div class="a" style="left:382px;top:257px;width:1px;height:24px;background:#c2c2c2"></div>
<div class="a" style="left:593px;top:257px;width:1px;height:24px;background:#c2c2c2"></div>
<div class="a" style="left:631px;top:257px;width:1px;height:24px;background:#c2c2c2"></div>
<div class="a" style="left:731px;top:257px;width:1px;height:24px;background:#c2c2c2"></div>
<div class="a" style="left:914px;top:257px;width:1px;height:24px;background:#c2c2c2"></div>
<div class="a" style="left:1160px;top:257px;width:1px;height:24px;background:#c2c2c2"></div>
<svg class="a" style="left:240px;top:262px" width="11" height="13" viewBox="0 0 11 13"><path d="M0.5 0.5 H7 L10.5 4 V12.5 H0.5 Z" fill="#fff" stroke="#555"/><path d="M7 0.5 V4 H10.5" fill="none" stroke="#555"/></svg>
<svg class="a" style="left:270px;top:262px" width="14" height="13" viewBox="0 0 14 13"><path d="M4 6 L7.5 8 V11.5 L4 13 L0.5 11.5 V8 Z" fill="#d8d8d8" stroke="#b8b8b8" stroke-width="1"/><path d="M4 9.5 L7.5 8 V11.5 L4 13 Z" fill="#b8b8b8"/><path d="M10.5 0.5 L13.5 6.5 H7.5 Z" fill="#e3e3e3" stroke="#b8b8b8" stroke-width="1.2"/><path d="M2.5 6 V4.5 A3 3 0 0 1 6 2" stroke="#b8b8b8" stroke-width="1.4" fill="none"/><path d="M5.5 0 L8.5 2 L5.5 4 Z" fill="#b8b8b8"/></svg>
<svg class="a" style="left:302px;top:266px" width="7" height="4" viewBox="0 0 7 4"><path d="M0 0 H7 L3.5 3.5 Z" fill="#555"/></svg>
<svg class="a" style="left:326px;top:262px" width="12" height="12" viewBox="0 0 12 12"><rect x="0" y="0" width="7" height="7" fill="#67a18b"/><rect x="4" y="4" width="8" height="8" fill="#67a18b" stroke="#e3e3e3" stroke-width="1"/></svg>
<svg class="a" style="left:357px;top:262px" width="14" height="13" viewBox="0 0 14 13"><path d="M6 0 H14 V8 L7 13 L0 6 Z" fill="#3f7fc2"/><circle cx="11" cy="3" r="1.3" fill="#e3e3e3"/></svg>
<svg class="a" style="left:394px;top:262px" width="14" height="13" viewBox="0 0 14 13"><path d="M7 8.2 L10.6 4.4 H8.1 V0 H5.9 V4.4 H3.4 Z" fill="#3f7fc2"/><path d="M0 6.5 H2 V9.5 H12 V6.5 H14 V13 H0 Z" fill="#e8c07e"/><rect x="2" y="8.6" width="10" height="1.1" fill="#a8a8a8"/></svg>
<svg class="a" style="left:426px;top:266px" width="7" height="4" viewBox="0 0 7 4"><path d="M0 0 H7 L3.5 3.5 Z" fill="#222"/></svg>
<svg class="a" style="left:449px;top:262px" width="14" height="14" viewBox="0 0 14 14"><path d="M3.5 0.5 H10 L13.5 4 V13.5 H3.5 Z" fill="none" stroke="#666"/><path d="M10 0.5 V4 H13.5" fill="none" stroke="#666"/><path d="M8.5 6.2 A3.6 3.8 0 1 0 8.5 12.6" stroke="#eab865" stroke-width="1.8" fill="none"/><path d="M0 8.6 H6 M0 10.6 H6" stroke="#eab865" stroke-width="1.1"/></svg>
<svg class="a" style="left:480px;top:266px" width="7" height="4" viewBox="0 0 7 4"><path d="M0 0 H7 L3.5 3.5 Z" fill="#222"/></svg>
<svg class="a" style="left:504px;top:261px" width="14" height="14" viewBox="0 0 14 14"><circle cx="5.5" cy="5.5" r="3.8" fill="none" stroke="#555" stroke-width="1.6"/><path d="M8 8 L13 13" stroke="#555" stroke-width="2"/><path d="M9 1 A5 5 0 0 1 13 5" stroke="#3f7fc2" stroke-width="1.6" fill="none"/><path d="M1 9 A5 5 0 0 0 5 13" stroke="#3f7fc2" stroke-width="1.6" fill="none"/></svg>
<svg class="a" style="left:537px;top:262px" width="14" height="14" viewBox="0 0 14 14"><path d="M0.5 0.5 H7 L10.5 4 V13.5 H0.5 Z" fill="#fff" stroke="#555"/><path d="M5 12 L12 5 L13.5 6.5 L6.5 13.5 L4.5 14 Z" fill="#3f7fc2"/></svg>
<svg class="a" style="left:572px;top:261px" width="6" height="14" viewBox="0 0 6 14"><circle cx="3" cy="3" r="2.6" fill="#e8400c"/><rect x="2.2" y="5" width="1.6" height="9" fill="#3f7fc2"/></svg>
<svg class="a" style="left:605px;top:261px" width="14" height="14" viewBox="0 0 14 14"><circle cx="7" cy="7" r="6.5" fill="#c8c8c8"/><path d="M3 3 L6 4 L5 7 L7 9 L6 12 L3 10 L2 6 Z M9 2 L12 4 L12 8 L10 9 L9 6 Z" fill="#8e8e8e"/></svg>
<svg class="a" style="left:642px;top:261px" width="14" height="14" viewBox="0 0 14 14"><circle cx="7" cy="7" r="7" fill="#67a18b"/><path d="M7 3 L10.5 7 H8 V11 H6 V7 H3.5 Z" fill="#fff"/></svg>
<svg class="a" style="left:674px;top:261px" width="14" height="14" viewBox="0 0 14 14"><circle cx="7" cy="7" r="7" fill="#67a18b"/><path d="M7 11 L10.5 7 H8 V3 H6 V7 H3.5 Z" fill="#fff"/></svg>
<svg class="a" style="left:706px;top:262px" width="14" height="12" viewBox="0 0 14 12"><path d="M0 1 H5 L6.5 2.5 H13 V12 H0 Z" fill="#f3d6a0"/><path d="M0 12 L2 5 H14 L12.5 12 Z" fill="#e8c07e"/></svg>
<svg class="a" style="left:743px;top:261px" width="15" height="14" viewBox="0 0 15 14"><rect x="0.5" y="0.5" width="9" height="10" fill="#fff" stroke="#666"/><path d="M3 3 H7 M3 3 L5 5.5 L3 8 H7" stroke="#e8c07e" fill="none" stroke-width="1.1"/><path d="M14.5 4 V13.5 H5 Z" fill="#e8c07e"/><path d="M12.5 9 V11.5 H10 Z" fill="#fff"/></svg>
<svg class="a" style="left:761px;top:265px" width="7" height="4" viewBox="0 0 7 4"><path d="M0 0 H7 L3.5 3.5 Z" fill="#222"/></svg>
<svg class="a" style="left:784px;top:261px" width="14" height="14" viewBox="0 0 14 14"><circle cx="7" cy="7" r="6.5" fill="#c8c8c8"/><path d="M3 3 L6 4 L5 7 L7 9 L6 12 L3 10 L2 6 Z M9 2 L12 4 L12 8 L10 9 L9 6 Z" fill="#8e8e8e"/></svg>
<svg class="a" style="left:816px;top:266px" width="7" height="4" viewBox="0 0 7 4"><path d="M0 0 H7 L3.5 3.5 Z" fill="#555"/></svg>
<svg class="a" style="left:838px;top:261px" width="13" height="14" viewBox="0 0 13 14"><rect x="0.5" y="2.5" width="12" height="11" fill="#fff" stroke="#888"/><rect x="0.5" y="2.5" width="12" height="3" fill="#ddd" stroke="#888"/><path d="M3 8 H10 M3 10.5 H10 M5 6 V13 M8 6 V13" stroke="#f0c0b0" stroke-width="0.8"/><text x="2" y="5" font-size="6" font-family="Liberation Sans" font-weight="bold" fill="#e8400c">✕?</text></svg>
<svg class="a" style="left:858px;top:265px" width="7" height="4" viewBox="0 0 7 4"><path d="M0 0 H7 L3.5 3.5 Z" fill="#222"/></svg>
<svg class="a" style="left:879px;top:262px" width="14" height="13" viewBox="0 0 14 13"><path d="M0 1 H9 M0 4 H9 M0 7 H6 M0 10 H6" stroke="#8a8a8a" stroke-width="1.4"/><rect x="7" y="6" width="7" height="7" fill="#e8c07e"/><path d="M8.8 7.5 H12 M8.8 7.5 L10.5 9.5 L8.8 11.5 H12" stroke="#fff" fill="none" stroke-width="0.9"/></svg>
<svg class="a" style="left:899px;top:265px" width="7" height="4" viewBox="0 0 7 4"><path d="M0 0 H7 L3.5 3.5 Z" fill="#222"/></svg>
<svg class="a" style="left:930px;top:262px" width="10" height="13" viewBox="0 0 10 13"><path d="M0 0 H10 L6 6 V13 L4 11.5 V6 Z" fill="#e9b45a"/></svg>
<div class="t" style="top:261.84px;font-size:12px;line-height:14px;left:947px;color:#262626;letter-spacing:0px;">Filter</div>
<svg class="a" style="left:976px;top:265px" width="7" height="4" viewBox="0 0 7 4"><path d="M0 0 H7 L3.5 3.5 Z" fill="#222"/></svg>
<div class="a" style="left:997px;top:258px;width:150px;height:20px;background:#fff;box-sizing:border-box;border:1px solid #acacac;"></div>
<div class="t" style="top:261.69px;font-size:11px;line-height:13px;left:1003px;color:#6d6d6d;letter-spacing:-0.2px;">Suchbegriff...</div>
<div class="t" style="top:261.69px;font-size:11px;line-height:13px;right:779px;color:#262626;letter-spacing:-0.2px;">Suche</div>
<svg class="a" style="left:1173px;top:260px" width="14" height="14" viewBox="0 0 14 14"><path d="M0.75 3 V13.25 H10" stroke="#555" stroke-width="1.5" fill="none"/><rect x="2.5" y="3" width="3" height="3" fill="#555"/><rect x="8.5" y="0.5" width="5" height="7" fill="#fff" stroke="#555"/><path d="M2.5 9.5 H8.5 V13" stroke="#555" stroke-width="1.4" fill="none"/></svg>
<svg class="a" style="left:1203px;top:265px" width="7" height="4" viewBox="0 0 7 4"><path d="M0 0 H7 L3.5 3.5 Z" fill="#222"/></svg>
<div class="a" style="left:228px;top:282px;width:1682px;height:498px;background:#f0f0f0;"></div>
<div class="a" style="left:228px;top:282px;width:1px;height:498px;background:#acacac"></div>
<div class="a" style="left:1909px;top:253px;width:1px;height:789px;background:#acacac"></div>
<div class="a" style="left:228px;top:282px;width:1682px;height:1px;background:#acacac"></div>
<div class="a" style="left:228px;top:779px;width:1641px;height:1px;background:#acacac"></div>
<div class="a" style="left:229px;top:308px;width:1640px;height:471px;background:#ffffff;"></div>
<div class="a" style="left:229px;top:307px;width:1680px;height:1px;background:#cfcfcf"></div>
<div class="a" style="left:253px;top:283px;width:1px;height:24px;background:#d6d6d6"></div>
<div class="a" style="left:413px;top:283px;width:2px;height:24px;background:#d6d6d6"></div>
<div class="a" style="left:542px;top:283px;width:1px;height:24px;background:#d6d6d6"></div>
<div class="a" style="left:866px;top:283px;width:1px;height:24px;background:#d6d6d6"></div>
<div class="a" style="left:975px;top:283px;width:1px;height:24px;background:#d6d6d6"></div>
<div class="a" style="left:1086px;top:283px;width:1px;height:24px;background:#d6d6d6"></div>
<div class="a" style="left:1197px;top:283px;width:1px;height:24px;background:#d6d6d6"></div>
<div class="a" style="left:1309px;top:283px;width:1px;height:24px;background:#d6d6d6"></div>
<div class="a" style="left:1421px;top:283px;width:1px;height:24px;background:#d6d6d6"></div>
<div class="a" style="left:1533px;top:283px;width:1px;height:24px;background:#d6d6d6"></div>
<div class="a" style="left:1645px;top:283px;width:1px;height:24px;background:#d6d6d6"></div>
<div class="a" style="left:1757px;top:283px;width:1px;height:24px;background:#d6d6d6"></div>
<div class="t" style="top:288.69px;font-size:11px;line-height:13px;left:259px;color:#262626;letter-spacing:-0.2px;">Positionsnummer</div>
<div class="t" style="top:288.69px;font-size:11px;line-height:13px;left:420px;color:#262626;letter-spacing:-0.2px;">LV PosNr</div>
<div class="t" style="top:288.69px;font-size:11px;line-height:13px;left:548px;color:#262626;letter-spacing:-0.2px;">Bezeichnung</div>
<div class="t" style="top:288.69px;font-size:11px;line-height:13px;right:951px;color:#262626;letter-spacing:-0.2px;">Menge</div>
<div class="t" style="top:288.69px;font-size:11px;line-height:13px;left:981px;color:#262626;letter-spacing:-0.2px;">Einheit</div>
<div class="t" style="top:288.69px;font-size:11px;line-height:13px;right:729px;color:#262626;letter-spacing:-0.2px;">Minuten Basis</div>
<div class="t" style="top:288.69px;font-size:11px;line-height:13px;right:618px;color:#262626;letter-spacing:-0.2px;">% Sonstiges</div>
<div class="t" style="top:288.69px;font-size:11px;line-height:13px;right:505px;color:#262626;letter-spacing:-0.2px;">% Lohn</div>
<div class="t" style="top:288.69px;font-size:11px;line-height:13px;right:393px;color:#262626;letter-spacing:-0.2px;">Summe Lohn</div>
<div class="t" style="top:288.69px;font-size:11px;line-height:13px;right:281px;color:#262626;letter-spacing:-0.2px;">Summe Sonstiges</div>
<div class="t" style="top:288.69px;font-size:11px;line-height:13px;right:169px;color:#262626;letter-spacing:-0.2px;">Einheitspreis</div>
<div class="t" style="top:288.69px;font-size:11px;line-height:13px;right:58px;color:#262626;letter-spacing:-0.2px;">Gesamtpreis</div>
<svg class="a" style="left:1894px;top:292px" width="5" height="8" viewBox="0 0 5 8"><path d="M0.8 0.8 L4 4 L0.8 7.2" stroke="#444" stroke-width="1.3" fill="none"/></svg>
<div class="a" style="left:253px;top:307px;width:1px;height:323px;background:#d6d6d6"></div>
<div class="a" style="left:290px;top:307px;width:1579px;height:1px;background:#d6d6d6"></div>
<div class="a" style="left:290px;top:330px;width:1579px;height:1px;background:#d6d6d6"></div>
<div class="a" style="left:290px;top:307px;width:1px;height:24px;background:#d6d6d6"></div>
<div class="a" style="left:413px;top:307px;width:2px;height:24px;background:#d6d6d6"></div>
<div class="a" style="left:542px;top:307px;width:1px;height:24px;background:#d6d6d6"></div>
<div class="a" style="left:866px;top:307px;width:1px;height:24px;background:#d6d6d6"></div>
<div class="a" style="left:975px;top:307px;width:1px;height:24px;background:#d6d6d6"></div>
<div class="a" style="left:1086px;top:307px;width:1px;height:24px;background:#d6d6d6"></div>
<div class="a" style="left:1197px;top:307px;width:1px;height:24px;background:#d6d6d6"></div>
<div class="a" style="left:1309px;top:307px;width:1px;height:24px;background:#d6d6d6"></div>
<div class="a" style="left:1421px;top:307px;width:1px;height:24px;background:#d6d6d6"></div>
<div class="a" style="left:1533px;top:307px;width:1px;height:24px;background:#d6d6d6"></div>
<div class="a" style="left:1645px;top:307px;width:1px;height:24px;background:#d6d6d6"></div>
<div class="a" style="left:1757px;top:307px;width:1px;height:24px;background:#d6d6d6"></div>
<svg class="a" style="left:259px;top:317px" width="8" height="5" viewBox="0 0 8 5"><path d="M0.8 0.8 L4 4 L7.2 0.8" stroke="#444" stroke-width="1.3" fill="none"/></svg>
<svg class="a" style="left:274px;top:312px" width="16" height="14" viewBox="0 0 16 14"><path d="M0.5 2.5 V12.5 H12 V4 H6 L4.5 1.5 H1.5 Z" fill="#fdf3e0" stroke="#e8c07e"/><path d="M0.5 12.5 L3 6 H14 L12 12.5 Z" fill="#e8c07e"/><circle cx="12" cy="10" r="3.8" fill="#3f7fc2"/><rect x="11.4" y="9.2" width="1.3" height="3" fill="#fff"/><rect x="11.4" y="7.4" width="1.3" height="1.2" fill="#fff"/></svg>
<div class="t" style="top:311.84px;font-size:12px;line-height:14px;left:297px;font-weight:bold;color:#202020;letter-spacing:0px;">1</div>
<div class="t" style="top:311.84px;font-size:12px;line-height:14px;left:420px;font-weight:bold;color:#202020;letter-spacing:0px;">01</div>
<div class="t" style="top:311.84px;font-size:12px;line-height:14px;left:548px;font-weight:bold;color:#202020;letter-spacing:0px;">Baustellengemeinkosten</div>
<div class="t" style="top:311.84px;font-size:12px;line-height:14px;right:617px;font-weight:bold;color:#202020;letter-spacing:0px;">100,00 %</div>
<div class="t" style="top:311.84px;font-size:12px;line-height:14px;right:505px;font-weight:bold;color:#202020;letter-spacing:0px;">100,00 %</div>
<div class="t" style="top:311.84px;font-size:12px;line-height:14px;right:393px;font-weight:bold;color:#202020;letter-spacing:0px;">120,00 €</div>
<div class="t" style="top:311.84px;font-size:12px;line-height:14px;right:281px;font-weight:bold;color:#202020;letter-spacing:0px;">500,00 €</div>
<div class="t" style="top:311.84px;font-size:12px;line-height:14px;right:57px;font-weight:bold;color:#202020;letter-spacing:0px;">620,00 €</div>
<div class="a" style="left:308px;top:330px;width:1561px;height:1px;background:#d6d6d6"></div>
<div class="a" style="left:308px;top:353px;width:1561px;height:1px;background:#d6d6d6"></div>
<div class="a" style="left:308px;top:330px;width:1px;height:24px;background:#d6d6d6"></div>
<div class="a" style="left:413px;top:330px;width:2px;height:24px;background:#d6d6d6"></div>
<div class="a" style="left:542px;top:330px;width:1px;height:24px;background:#d6d6d6"></div>
<div class="a" style="left:866px;top:330px;width:1px;height:24px;background:#d6d6d6"></div>
<div class="a" style="left:975px;top:330px;width:1px;height:24px;background:#d6d6d6"></div>
<div class="a" style="left:1086px;top:330px;width:1px;height:24px;background:#d6d6d6"></div>
<div class="a" style="left:1197px;top:330px;width:1px;height:24px;background:#d6d6d6"></div>
<div class="a" style="left:1309px;top:330px;width:1px;height:24px;background:#d6d6d6"></div>
<div class="a" style="left:1421px;top:330px;width:1px;height:24px;background:#d6d6d6"></div>
<div class="a" style="left:1533px;top:330px;width:1px;height:24px;background:#d6d6d6"></div>
<div class="a" style="left:1645px;top:330px;width:1px;height:24px;background:#d6d6d6"></div>
<div class="a" style="left:1757px;top:330px;width:1px;height:24px;background:#d6d6d6"></div>
<svg class="a" style="left:277px;top:340px" width="8" height="5" viewBox="0 0 8 5"><path d="M0.8 0.8 L4 4 L7.2 0.8" stroke="#444" stroke-width="1.3" fill="none"/></svg>
<svg class="a" style="left:292px;top:335px" width="16" height="14" viewBox="0 0 16 14"><path d="M0.5 2.5 V12.5 H12 V4 H6 L4.5 1.5 H1.5 Z" fill="#fdf3e0" stroke="#e8c07e"/><path d="M0.5 12.5 L3 6 H14 L12 12.5 Z" fill="#e8c07e"/><circle cx="12" cy="10" r="3.8" fill="#3f7fc2"/><rect x="11.4" y="9.2" width="1.3" height="3" fill="#fff"/><rect x="11.4" y="7.4" width="1.3" height="1.2" fill="#fff"/></svg>
<div class="t" style="top:334.84px;font-size:12px;line-height:14px;left:315px;font-weight:bold;color:#202020;letter-spacing:0px;">1.1</div>
<div class="t" style="top:334.84px;font-size:12px;line-height:14px;left:420px;font-weight:bold;color:#202020;letter-spacing:0px;">01.11</div>
<div class="t" style="top:334.84px;font-size:12px;line-height:14px;left:548px;font-weight:bold;color:#202020;letter-spacing:0px;">Zusammenfassung der Baustellengemeinkosten</div>
<div class="t" style="top:334.84px;font-size:12px;line-height:14px;right:617px;font-weight:bold;color:#202020;letter-spacing:0px;">100,00 %</div>
<div class="t" style="top:334.84px;font-size:12px;line-height:14px;right:505px;font-weight:bold;color:#202020;letter-spacing:0px;">100,00 %</div>
<div class="t" style="top:334.84px;font-size:12px;line-height:14px;right:393px;font-weight:bold;color:#202020;letter-spacing:0px;">120,00 €</div>
<div class="t" style="top:334.84px;font-size:12px;line-height:14px;right:281px;font-weight:bold;color:#202020;letter-spacing:0px;">500,00 €</div>
<div class="t" style="top:334.84px;font-size:12px;line-height:14px;right:57px;font-weight:bold;color:#202020;letter-spacing:0px;">620,00 €</div>
<div class="a" style="left:326px;top:353px;width:1543px;height:1px;background:#d6d6d6"></div>
<div class="a" style="left:326px;top:376px;width:1543px;height:1px;background:#d6d6d6"></div>
<div class="a" style="left:326px;top:353px;width:1px;height:24px;background:#d6d6d6"></div>
<div class="a" style="left:413px;top:353px;width:2px;height:24px;background:#d6d6d6"></div>
<div class="a" style="left:542px;top:353px;width:1px;height:24px;background:#d6d6d6"></div>
<div class="a" style="left:866px;top:353px;width:1px;height:24px;background:#d6d6d6"></div>
<div class="a" style="left:975px;top:353px;width:1px;height:24px;background:#d6d6d6"></div>
<div class="a" style="left:1086px;top:353px;width:1px;height:24px;background:#d6d6d6"></div>
<div class="a" style="left:1197px;top:353px;width:1px;height:24px;background:#d6d6d6"></div>
<div class="a" style="left:1309px;top:353px;width:1px;height:24px;background:#d6d6d6"></div>
<div class="a" style="left:1421px;top:353px;width:1px;height:24px;background:#d6d6d6"></div>
<div class="a" style="left:1533px;top:353px;width:1px;height:24px;background:#d6d6d6"></div>
<div class="a" style="left:1645px;top:353px;width:1px;height:24px;background:#d6d6d6"></div>
<div class="a" style="left:1757px;top:353px;width:1px;height:24px;background:#d6d6d6"></div>
<svg class="a" style="left:311px;top:358px" width="15" height="15" viewBox="0 0 15 15"><rect x="0.5" y="0.5" width="11" height="13" fill="#fff" stroke="#555"/><rect x="2" y="2" width="8" height="1" fill="#a8a8a8"/><rect x="2" y="4" width="3" height="2" fill="#a8a8a8"/><rect x="6" y="4" width="4" height="1" fill="#a8a8a8"/><rect x="2" y="7" width="8" height="1" fill="#a8a8a8"/><rect x="2" y="9" width="6" height="1" fill="#a8a8a8"/><rect x="2" y="11" width="5" height="1" fill="#a8a8a8"/><circle cx="11" cy="11.2" r="3.8" fill="#3f7fc2"/><rect x="10.4" y="10.4" width="1.3" height="3" fill="#fff"/><rect x="10.4" y="8.6" width="1.3" height="1.2" fill="#fff"/></svg>
<div class="t" style="top:358.69px;font-size:11px;line-height:13px;left:333px;color:#202020;letter-spacing:0.6px;">1.1.0.a</div>
<div class="t" style="top:358.69px;font-size:11px;line-height:13px;left:420px;color:#202020;letter-spacing:0.3px;">01.1101</div>
<div class="t" style="top:358.69px;font-size:11px;line-height:13px;left:548px;color:#7d7d7d;letter-spacing:-0.2px;">Einmalige Kosten der Baustelle, einschließlich Geräte, Stromver...</div>
<div class="a" style="left:326px;top:376px;width:1543px;height:1px;background:#d6d6d6"></div>
<div class="a" style="left:326px;top:399px;width:1543px;height:1px;background:#d6d6d6"></div>
<div class="a" style="left:326px;top:376px;width:1px;height:24px;background:#d6d6d6"></div>
<div class="a" style="left:413px;top:376px;width:2px;height:24px;background:#d6d6d6"></div>
<div class="a" style="left:542px;top:376px;width:1px;height:24px;background:#d6d6d6"></div>
<div class="a" style="left:866px;top:376px;width:1px;height:24px;background:#d6d6d6"></div>
<div class="a" style="left:975px;top:376px;width:1px;height:24px;background:#d6d6d6"></div>
<div class="a" style="left:1086px;top:376px;width:1px;height:24px;background:#d6d6d6"></div>
<div class="a" style="left:1197px;top:376px;width:1px;height:24px;background:#d6d6d6"></div>
<div class="a" style="left:1309px;top:376px;width:1px;height:24px;background:#d6d6d6"></div>
<div class="a" style="left:1421px;top:376px;width:1px;height:24px;background:#d6d6d6"></div>
<div class="a" style="left:1533px;top:376px;width:1px;height:24px;background:#d6d6d6"></div>
<div class="a" style="left:1645px;top:376px;width:1px;height:24px;background:#d6d6d6"></div>
<div class="a" style="left:1757px;top:376px;width:1px;height:24px;background:#d6d6d6"></div>
<svg class="a" style="left:310px;top:381px" width="15" height="15" viewBox="0 0 15 15"><path d="M6.5 0 L10 3.8 H7.6 V8.2 H5.4 V3.8 H3 Z" fill="#3f7fc2"/><path d="M0 7.5 H2 V10.5 H11 V7.5 H13 V14 H0 Z" fill="#e8c07e"/><rect x="2" y="9.6" width="9" height="1.1" fill="#a8a8a8"/><circle cx="11" cy="11.2" r="3.8" fill="#3f7fc2"/><rect x="10.4" y="10.4" width="1.3" height="3" fill="#fff"/><rect x="10.4" y="8.6" width="1.3" height="1.2" fill="#fff"/></svg>
<div class="t" style="top:381.69px;font-size:11px;line-height:13px;left:333px;color:#202020;letter-spacing:0.6px;">1.1.1</div>
<div class="t" style="top:381.69px;font-size:11px;line-height:13px;left:420px;color:#202020;letter-spacing:0.3px;">01.1101A</div>
<div class="t" style="top:381.69px;font-size:11px;line-height:13px;left:548px;color:#202020;letter-spacing:-0.2px;">Einrichten der Baustelle</div>
<div class="t" style="top:381.69px;font-size:11px;line-height:13px;right:951px;color:#202020;letter-spacing:-0.2px;">1,00</div>
<div class="t" style="top:381.69px;font-size:11px;line-height:13px;right:729px;color:#202020;letter-spacing:-0.2px;">120,00</div>
<div class="t" style="top:381.69px;font-size:11px;line-height:13px;right:617px;color:#202020;letter-spacing:-0.2px;">0,00 %</div>
<div class="t" style="top:381.69px;font-size:11px;line-height:13px;right:505px;color:#202020;letter-spacing:-0.2px;">100,00 %</div>
<div class="t" style="top:381.69px;font-size:11px;line-height:13px;right:393px;color:#202020;letter-spacing:-0.2px;">120,00 €</div>
<div class="t" style="top:381.69px;font-size:11px;line-height:13px;right:281px;color:#202020;letter-spacing:-0.2px;">500,00 €</div>
<div class="t" style="top:381.69px;font-size:11px;line-height:13px;right:169px;color:#202020;letter-spacing:-0.2px;">620,00 €</div>
<div class="t" style="top:381.69px;font-size:11px;line-height:13px;right:57px;color:#202020;letter-spacing:-0.2px;">620,00 €</div>
<div class="t" style="top:381.69px;font-size:11px;line-height:13px;left:981px;color:#202020;letter-spacing:-0.2px;">PA</div>
<div class="a" style="left:290px;top:399px;width:1579px;height:1px;background:#d6d6d6"></div>
<div class="a" style="left:290px;top:422px;width:1579px;height:1px;background:#d6d6d6"></div>
<div class="a" style="left:290px;top:399px;width:1px;height:24px;background:#d6d6d6"></div>
<div class="a" style="left:413px;top:399px;width:2px;height:24px;background:#d6d6d6"></div>
<div class="a" style="left:542px;top:399px;width:1px;height:24px;background:#d6d6d6"></div>
<div class="a" style="left:866px;top:399px;width:1px;height:24px;background:#d6d6d6"></div>
<div class="a" style="left:975px;top:399px;width:1px;height:24px;background:#d6d6d6"></div>
<div class="a" style="left:1086px;top:399px;width:1px;height:24px;background:#d6d6d6"></div>
<div class="a" style="left:1197px;top:399px;width:1px;height:24px;background:#d6d6d6"></div>
<div class="a" style="left:1309px;top:399px;width:1px;height:24px;background:#d6d6d6"></div>
<div class="a" style="left:1421px;top:399px;width:1px;height:24px;background:#d6d6d6"></div>
<div class="a" style="left:1533px;top:399px;width:1px;height:24px;background:#d6d6d6"></div>
<div class="a" style="left:1645px;top:399px;width:1px;height:24px;background:#d6d6d6"></div>
<div class="a" style="left:1757px;top:399px;width:1px;height:24px;background:#d6d6d6"></div>
<svg class="a" style="left:259px;top:409px" width="8" height="5" viewBox="0 0 8 5"><path d="M0.8 0.8 L4 4 L7.2 0.8" stroke="#444" stroke-width="1.3" fill="none"/></svg>
<svg class="a" style="left:274px;top:404px" width="16" height="14" viewBox="0 0 16 14"><path d="M0.5 2.5 V12.5 H12 V4 H6 L4.5 1.5 H1.5 Z" fill="#fdf3e0" stroke="#e8c07e"/><path d="M0.5 12.5 L3 6 H14 L12 12.5 Z" fill="#e8c07e"/><circle cx="12" cy="10" r="3.8" fill="#3f7fc2"/><rect x="11.4" y="9.2" width="1.3" height="3" fill="#fff"/><rect x="11.4" y="7.4" width="1.3" height="1.2" fill="#fff"/></svg>
<div class="t" style="top:403.84px;font-size:12px;line-height:14px;left:297px;font-weight:bold;color:#202020;letter-spacing:0px;">2</div>
<div class="t" style="top:403.84px;font-size:12px;line-height:14px;left:420px;font-weight:bold;color:#202020;letter-spacing:0px;">36</div>
<div class="t" style="top:403.84px;font-size:12px;line-height:14px;left:548px;font-weight:bold;color:#202020;letter-spacing:0px;">Wärmeverteilung</div>
<div class="t" style="top:403.84px;font-size:12px;line-height:14px;right:617px;font-weight:bold;color:#202020;letter-spacing:0px;">40,00 %</div>
<div class="t" style="top:403.84px;font-size:12px;line-height:14px;right:505px;font-weight:bold;color:#202020;letter-spacing:0px;">100,00 %</div>
<div class="t" style="top:403.84px;font-size:12px;line-height:14px;right:393px;font-weight:bold;color:#202020;letter-spacing:0px;">3.830,00 €</div>
<div class="t" style="top:403.84px;font-size:12px;line-height:14px;right:281px;font-weight:bold;color:#202020;letter-spacing:0px;">8.904,00 €</div>
<div class="t" style="top:403.84px;font-size:12px;line-height:14px;right:57px;font-weight:bold;color:#202020;letter-spacing:0px;">12.734,00 €</div>
<div class="a" style="left:308px;top:422px;width:1561px;height:1px;background:#d6d6d6"></div>
<div class="a" style="left:308px;top:445px;width:1561px;height:1px;background:#d6d6d6"></div>
<div class="a" style="left:308px;top:422px;width:1px;height:24px;background:#d6d6d6"></div>
<div class="a" style="left:413px;top:422px;width:2px;height:24px;background:#d6d6d6"></div>
<div class="a" style="left:542px;top:422px;width:1px;height:24px;background:#d6d6d6"></div>
<div class="a" style="left:866px;top:422px;width:1px;height:24px;background:#d6d6d6"></div>
<div class="a" style="left:975px;top:422px;width:1px;height:24px;background:#d6d6d6"></div>
<div class="a" style="left:1086px;top:422px;width:1px;height:24px;background:#d6d6d6"></div>
<div class="a" style="left:1197px;top:422px;width:1px;height:24px;background:#d6d6d6"></div>
<div class="a" style="left:1309px;top:422px;width:1px;height:24px;background:#d6d6d6"></div>
<div class="a" style="left:1421px;top:422px;width:1px;height:24px;background:#d6d6d6"></div>
<div class="a" style="left:1533px;top:422px;width:1px;height:24px;background:#d6d6d6"></div>
<div class="a" style="left:1645px;top:422px;width:1px;height:24px;background:#d6d6d6"></div>
<div class="a" style="left:1757px;top:422px;width:1px;height:24px;background:#d6d6d6"></div>
<svg class="a" style="left:279px;top:430px" width="5" height="8" viewBox="0 0 5 8"><path d="M0.8 0.8 L4 4 L0.8 7.2" stroke="#444" stroke-width="1.3" fill="none"/></svg>
<svg class="a" style="left:292px;top:427px" width="16" height="14" viewBox="0 0 16 14"><path d="M0.5 2.5 V12.5 H12 V4 H6 L4.5 1.5 H1.5 Z" fill="#fdf3e0" stroke="#e8c07e"/><path d="M0.5 12.5 L3 6 H14 L12 12.5 Z" fill="#e8c07e"/><circle cx="12" cy="10" r="3.8" fill="#3f7fc2"/><rect x="11.4" y="9.2" width="1.3" height="3" fill="#fff"/><rect x="11.4" y="7.4" width="1.3" height="1.2" fill="#fff"/></svg>
<div class="t" style="top:426.84px;font-size:12px;line-height:14px;left:315px;font-weight:bold;color:#202020;letter-spacing:0px;">2.1</div>
<div class="t" style="top:426.84px;font-size:12px;line-height:14px;left:420px;font-weight:bold;color:#202020;letter-spacing:0px;">36.01</div>
<div class="t" style="top:426.84px;font-size:12px;line-height:14px;left:548px;font-weight:bold;color:#202020;letter-spacing:0px;">Heizungsleitungen und Zubehör</div>
<div class="t" style="top:426.84px;font-size:12px;line-height:14px;right:617px;font-weight:bold;color:#202020;letter-spacing:0px;">40,00 %</div>
<div class="t" style="top:426.84px;font-size:12px;line-height:14px;right:505px;font-weight:bold;color:#202020;letter-spacing:0px;">100,00 %</div>
<div class="t" style="top:426.84px;font-size:12px;line-height:14px;right:393px;font-weight:bold;color:#202020;letter-spacing:0px;">3.830,00 €</div>
<div class="t" style="top:426.84px;font-size:12px;line-height:14px;right:281px;font-weight:bold;color:#202020;letter-spacing:0px;">8.904,00 €</div>
<div class="t" style="top:426.84px;font-size:12px;line-height:14px;right:57px;font-weight:bold;color:#202020;letter-spacing:0px;">12.734,00 €</div>
<div class="a" style="left:290px;top:445px;width:1579px;height:1px;background:#d6d6d6"></div>
<div class="a" style="left:290px;top:468px;width:1579px;height:1px;background:#d6d6d6"></div>
<div class="a" style="left:290px;top:445px;width:1px;height:24px;background:#d6d6d6"></div>
<div class="a" style="left:413px;top:445px;width:2px;height:24px;background:#d6d6d6"></div>
<div class="a" style="left:542px;top:445px;width:1px;height:24px;background:#d6d6d6"></div>
<div class="a" style="left:866px;top:445px;width:1px;height:24px;background:#d6d6d6"></div>
<div class="a" style="left:975px;top:445px;width:1px;height:24px;background:#d6d6d6"></div>
<div class="a" style="left:1086px;top:445px;width:1px;height:24px;background:#d6d6d6"></div>
<div class="a" style="left:1197px;top:445px;width:1px;height:24px;background:#d6d6d6"></div>
<div class="a" style="left:1309px;top:445px;width:1px;height:24px;background:#d6d6d6"></div>
<div class="a" style="left:1421px;top:445px;width:1px;height:24px;background:#d6d6d6"></div>
<div class="a" style="left:1533px;top:445px;width:1px;height:24px;background:#d6d6d6"></div>
<div class="a" style="left:1645px;top:445px;width:1px;height:24px;background:#d6d6d6"></div>
<div class="a" style="left:1757px;top:445px;width:1px;height:24px;background:#d6d6d6"></div>
<svg class="a" style="left:259px;top:455px" width="8" height="5" viewBox="0 0 8 5"><path d="M0.8 0.8 L4 4 L7.2 0.8" stroke="#444" stroke-width="1.3" fill="none"/></svg>
<svg class="a" style="left:274px;top:450px" width="16" height="14" viewBox="0 0 16 14"><path d="M0.5 2.5 V12.5 H12 V4 H6 L4.5 1.5 H1.5 Z" fill="#fdf3e0" stroke="#e8c07e"/><path d="M0.5 12.5 L3 6 H14 L12 12.5 Z" fill="#e8c07e"/><circle cx="12" cy="10" r="3.8" fill="#3f7fc2"/><rect x="11.4" y="9.2" width="1.3" height="3" fill="#fff"/><rect x="11.4" y="7.4" width="1.3" height="1.2" fill="#fff"/></svg>
<div class="t" style="top:449.84px;font-size:12px;line-height:14px;left:297px;font-weight:bold;color:#202020;letter-spacing:0px;">3</div>
<div class="t" style="top:449.84px;font-size:12px;line-height:14px;left:420px;font-weight:bold;color:#202020;letter-spacing:0px;">37</div>
<div class="t" style="top:449.84px;font-size:12px;line-height:14px;left:548px;font-weight:bold;color:#202020;letter-spacing:0px;">Wärmeabgabe</div>
<div class="t" style="top:449.84px;font-size:12px;line-height:14px;right:617px;font-weight:bold;color:#202020;letter-spacing:0px;">40,00 %</div>
<div class="t" style="top:449.84px;font-size:12px;line-height:14px;right:505px;font-weight:bold;color:#202020;letter-spacing:0px;">100,00 %</div>
<div class="t" style="top:449.84px;font-size:12px;line-height:14px;right:393px;font-weight:bold;color:#202020;letter-spacing:0px;">738,00 €</div>
<div class="t" style="top:449.84px;font-size:12px;line-height:14px;right:281px;font-weight:bold;color:#202020;letter-spacing:0px;">10.956,60 €</div>
<div class="t" style="top:449.84px;font-size:12px;line-height:14px;right:57px;font-weight:bold;color:#202020;letter-spacing:0px;">11.694,60 €</div>
<div class="a" style="left:308px;top:468px;width:1561px;height:1px;background:#d6d6d6"></div>
<div class="a" style="left:308px;top:491px;width:1561px;height:1px;background:#d6d6d6"></div>
<div class="a" style="left:308px;top:468px;width:1px;height:24px;background:#d6d6d6"></div>
<div class="a" style="left:413px;top:468px;width:2px;height:24px;background:#d6d6d6"></div>
<div class="a" style="left:542px;top:468px;width:1px;height:24px;background:#d6d6d6"></div>
<div class="a" style="left:866px;top:468px;width:1px;height:24px;background:#d6d6d6"></div>
<div class="a" style="left:975px;top:468px;width:1px;height:24px;background:#d6d6d6"></div>
<div class="a" style="left:1086px;top:468px;width:1px;height:24px;background:#d6d6d6"></div>
<div class="a" style="left:1197px;top:468px;width:1px;height:24px;background:#d6d6d6"></div>
<div class="a" style="left:1309px;top:468px;width:1px;height:24px;background:#d6d6d6"></div>
<div class="a" style="left:1421px;top:468px;width:1px;height:24px;background:#d6d6d6"></div>
<div class="a" style="left:1533px;top:468px;width:1px;height:24px;background:#d6d6d6"></div>
<div class="a" style="left:1645px;top:468px;width:1px;height:24px;background:#d6d6d6"></div>
<div class="a" style="left:1757px;top:468px;width:1px;height:24px;background:#d6d6d6"></div>
<svg class="a" style="left:277px;top:478px" width="8" height="5" viewBox="0 0 8 5"><path d="M0.8 0.8 L4 4 L7.2 0.8" stroke="#444" stroke-width="1.3" fill="none"/></svg>
<svg class="a" style="left:292px;top:473px" width="16" height="14" viewBox="0 0 16 14"><path d="M0.5 2.5 V12.5 H12 V4 H6 L4.5 1.5 H1.5 Z" fill="#fdf3e0" stroke="#e8c07e"/><path d="M0.5 12.5 L3 6 H14 L12 12.5 Z" fill="#e8c07e"/><circle cx="12" cy="10" r="3.8" fill="#3f7fc2"/><rect x="11.4" y="9.2" width="1.3" height="3" fill="#fff"/><rect x="11.4" y="7.4" width="1.3" height="1.2" fill="#fff"/></svg>
<div class="t" style="top:472.84px;font-size:12px;line-height:14px;left:315px;font-weight:bold;color:#202020;letter-spacing:0px;">3.1</div>
<div class="t" style="top:472.84px;font-size:12px;line-height:14px;left:420px;font-weight:bold;color:#202020;letter-spacing:0px;">37.01</div>
<div class="t" style="top:472.84px;font-size:12px;line-height:14px;left:548px;font-weight:bold;color:#202020;letter-spacing:0px;">Flachheizkörper 1f.Platte</div>
<div class="t" style="top:472.84px;font-size:12px;line-height:14px;right:617px;font-weight:bold;color:#202020;letter-spacing:0px;">40,00 %</div>
<div class="t" style="top:472.84px;font-size:12px;line-height:14px;right:505px;font-weight:bold;color:#202020;letter-spacing:0px;">100,00 %</div>
<div class="t" style="top:472.84px;font-size:12px;line-height:14px;right:393px;font-weight:bold;color:#202020;letter-spacing:0px;">738,00 €</div>
<div class="t" style="top:472.84px;font-size:12px;line-height:14px;right:281px;font-weight:bold;color:#202020;letter-spacing:0px;">10.956,60 €</div>
<div class="t" style="top:472.84px;font-size:12px;line-height:14px;right:57px;font-weight:bold;color:#202020;letter-spacing:0px;">11.694,60 €</div>
<div class="a" style="left:326px;top:491px;width:1543px;height:1px;background:#d6d6d6"></div>
<div class="a" style="left:326px;top:514px;width:1543px;height:1px;background:#d6d6d6"></div>
<div class="a" style="left:326px;top:491px;width:1px;height:24px;background:#d6d6d6"></div>
<div class="a" style="left:413px;top:491px;width:2px;height:24px;background:#d6d6d6"></div>
<div class="a" style="left:542px;top:491px;width:1px;height:24px;background:#d6d6d6"></div>
<div class="a" style="left:866px;top:491px;width:1px;height:24px;background:#d6d6d6"></div>
<div class="a" style="left:975px;top:491px;width:1px;height:24px;background:#d6d6d6"></div>
<div class="a" style="left:1086px;top:491px;width:1px;height:24px;background:#d6d6d6"></div>
<div class="a" style="left:1197px;top:491px;width:1px;height:24px;background:#d6d6d6"></div>
<div class="a" style="left:1309px;top:491px;width:1px;height:24px;background:#d6d6d6"></div>
<div class="a" style="left:1421px;top:491px;width:1px;height:24px;background:#d6d6d6"></div>
<div class="a" style="left:1533px;top:491px;width:1px;height:24px;background:#d6d6d6"></div>
<div class="a" style="left:1645px;top:491px;width:1px;height:24px;background:#d6d6d6"></div>
<div class="a" style="left:1757px;top:491px;width:1px;height:24px;background:#d6d6d6"></div>
<svg class="a" style="left:311px;top:496px" width="15" height="15" viewBox="0 0 15 15"><rect x="0.5" y="0.5" width="11" height="13" fill="#fff" stroke="#555"/><rect x="2" y="2" width="8" height="1" fill="#a8a8a8"/><rect x="2" y="4" width="3" height="2" fill="#a8a8a8"/><rect x="6" y="4" width="4" height="1" fill="#a8a8a8"/><rect x="2" y="7" width="8" height="1" fill="#a8a8a8"/><rect x="2" y="9" width="6" height="1" fill="#a8a8a8"/><rect x="2" y="11" width="5" height="1" fill="#a8a8a8"/><circle cx="11" cy="11.2" r="3.8" fill="#3f7fc2"/><rect x="10.4" y="10.4" width="1.3" height="3" fill="#fff"/><rect x="10.4" y="8.6" width="1.3" height="1.2" fill="#fff"/></svg>
<div class="t" style="top:496.69px;font-size:11px;line-height:13px;left:333px;color:#202020;letter-spacing:0.6px;">3.1.0.a</div>
<div class="t" style="top:496.69px;font-size:11px;line-height:13px;left:420px;color:#202020;letter-spacing:0.3px;">37.0101</div>
<div class="t" style="top:496.69px;font-size:11px;line-height:13px;left:548px;color:#7d7d7d;letter-spacing:-0.2px;">Flachheizkörper aus Stahlblech, profiliert als einfache Platte (1f...</div>
<div class="a" style="left:326px;top:515px;width:1543px;height:22px;background:#e3e3e3;"></div>
<svg class="a" style="left:236px;top:522px" width="10" height="8" viewBox="0 0 10 8"><path d="M0 4 H8.5 M5 0.7 L8.5 4 L5 7.3" stroke="#3f7fc2" stroke-width="1.2" fill="none"/></svg>
<div class="a" style="left:326px;top:514px;width:1543px;height:1px;background:#d6d6d6"></div>
<div class="a" style="left:326px;top:537px;width:1543px;height:1px;background:#d6d6d6"></div>
<div class="a" style="left:326px;top:514px;width:1px;height:24px;background:#d6d6d6"></div>
<div class="a" style="left:413px;top:514px;width:2px;height:24px;background:#d6d6d6"></div>
<div class="a" style="left:542px;top:514px;width:1px;height:24px;background:#d6d6d6"></div>
<div class="a" style="left:866px;top:514px;width:1px;height:24px;background:#d6d6d6"></div>
<div class="a" style="left:975px;top:514px;width:1px;height:24px;background:#d6d6d6"></div>
<div class="a" style="left:1086px;top:514px;width:1px;height:24px;background:#d6d6d6"></div>
<div class="a" style="left:1197px;top:514px;width:1px;height:24px;background:#d6d6d6"></div>
<div class="a" style="left:1309px;top:514px;width:1px;height:24px;background:#d6d6d6"></div>
<div class="a" style="left:1421px;top:514px;width:1px;height:24px;background:#d6d6d6"></div>
<div class="a" style="left:1533px;top:514px;width:1px;height:24px;background:#d6d6d6"></div>
<div class="a" style="left:1645px;top:514px;width:1px;height:24px;background:#d6d6d6"></div>
<div class="a" style="left:1757px;top:514px;width:1px;height:24px;background:#d6d6d6"></div>
<svg class="a" style="left:295px;top:524px" width="8" height="5" viewBox="0 0 8 5"><path d="M0.8 0.8 L4 4 L7.2 0.8" stroke="#444" stroke-width="1.3" fill="none"/></svg>
<svg class="a" style="left:311px;top:520px" width="14" height="13" viewBox="0 0 14 13"><text x="0" y="5.2" font-size="6" font-family="Liberation Sans" font-weight="bold" fill="#3f7fc2">1</text><text x="0" y="12.5" font-size="6" font-family="Liberation Sans" font-weight="bold" fill="#3f7fc2">2</text><path d="M5.5 1 H14 M5.5 3.5 H12 M5.5 8 H14 M5.5 10.5 H14" stroke="#666" stroke-width="1.2"/><path d="M5.5 5.8 H9 M5.5 12.6 H9" stroke="#666" stroke-width="0.9"/></svg>
<div class="t" style="top:519.69px;font-size:11px;line-height:13px;left:333px;color:#202020;letter-spacing:0.6px;">3.1.1</div>
<div class="t" style="top:519.69px;font-size:11px;line-height:13px;left:420px;color:#202020;letter-spacing:0.3px;">37.0101A</div>
<div class="t" style="top:519.69px;font-size:11px;line-height:13px;left:548px;color:#202020;letter-spacing:-0.2px;">FlachHK 1f.Pl.300 Standard 400</div>
<div class="t" style="top:519.69px;font-size:11px;line-height:13px;right:951px;color:#202020;letter-spacing:-0.2px;">15,00</div>
<div class="t" style="top:519.69px;font-size:11px;line-height:13px;right:729px;color:#202020;letter-spacing:-0.2px;">30,00</div>
<div class="t" style="top:519.69px;font-size:11px;line-height:13px;right:617px;color:#202020;letter-spacing:-0.2px;">40,00 %</div>
<div class="t" style="top:519.69px;font-size:11px;line-height:13px;right:505px;color:#202020;letter-spacing:-0.2px;">100,00 %</div>
<div class="t" style="top:519.69px;font-size:11px;line-height:13px;right:393px;color:#202020;letter-spacing:-0.2px;">450,00 €</div>
<div class="t" style="top:519.69px;font-size:11px;line-height:13px;right:281px;color:#202020;letter-spacing:-0.2px;">2.556,60 €</div>
<div class="t" style="top:519.69px;font-size:11px;line-height:13px;right:169px;color:#202020;letter-spacing:-0.2px;">200,44 €</div>
<div class="t" style="top:519.69px;font-size:11px;line-height:13px;right:57px;color:#202020;letter-spacing:-0.2px;">3.006,60 €</div>
<div class="t" style="top:519.69px;font-size:11px;line-height:13px;left:981px;color:#202020;letter-spacing:-0.2px;">STK</div>
<div class="a" style="left:344px;top:537px;width:1525px;height:1px;background:#d6d6d6"></div>
<div class="a" style="left:344px;top:560px;width:1525px;height:1px;background:#d6d6d6"></div>
<div class="a" style="left:344px;top:537px;width:1px;height:24px;background:#d6d6d6"></div>
<div class="a" style="left:413px;top:537px;width:2px;height:24px;background:#d6d6d6"></div>
<div class="a" style="left:542px;top:537px;width:1px;height:24px;background:#d6d6d6"></div>
<div class="a" style="left:866px;top:537px;width:1px;height:24px;background:#d6d6d6"></div>
<div class="a" style="left:975px;top:537px;width:1px;height:24px;background:#d6d6d6"></div>
<div class="a" style="left:1086px;top:537px;width:1px;height:24px;background:#d6d6d6"></div>
<div class="a" style="left:1197px;top:537px;width:1px;height:24px;background:#d6d6d6"></div>
<div class="a" style="left:1309px;top:537px;width:1px;height:24px;background:#d6d6d6"></div>
<div class="a" style="left:1421px;top:537px;width:1px;height:24px;background:#d6d6d6"></div>
<div class="a" style="left:1533px;top:537px;width:1px;height:24px;background:#d6d6d6"></div>
<div class="a" style="left:1645px;top:537px;width:1px;height:24px;background:#d6d6d6"></div>
<div class="a" style="left:1757px;top:537px;width:1px;height:24px;background:#d6d6d6"></div>
<svg class="a" style="left:328px;top:543px" width="14" height="13" viewBox="0 0 14 13"><path d="M7 0 L10.6 3.8 H8.1 V8.2 H5.9 V3.8 H3.4 Z" fill="#3f7fc2"/><path d="M0 6.5 H2 V9.5 H12 V6.5 H14 V13 H0 Z" fill="#e8c07e"/><rect x="2" y="8.6" width="10" height="1.1" fill="#a8a8a8"/></svg>
<div class="t" style="top:542.69px;font-size:11px;line-height:13px;left:351px;font-style:italic;color:#202020;letter-spacing:0.6px;">3.1.1.1</div>
<div class="t" style="top:542.69px;font-size:11px;line-height:13px;left:548px;font-style:italic;color:#202020;letter-spacing:-0.2px;">AE Heizkörper C4-006 IF36-U 300W</div>
<div class="t" style="top:542.69px;font-size:11px;line-height:13px;right:951px;font-style:italic;color:#202020;letter-spacing:-0.2px;">1,00</div>
<div class="t" style="top:542.69px;font-size:11px;line-height:13px;right:729px;font-style:italic;color:#202020;letter-spacing:-0.2px;">0,00</div>
<div class="t" style="top:542.69px;font-size:11px;line-height:13px;right:617px;font-style:italic;color:#202020;letter-spacing:-0.2px;">40,00 %</div>
<div class="t" style="top:542.69px;font-size:11px;line-height:13px;right:505px;font-style:italic;color:#202020;letter-spacing:-0.2px;">0,00 %</div>
<div class="t" style="top:542.69px;font-size:11px;line-height:13px;right:169px;font-style:italic;color:#202020;letter-spacing:-0.2px;">170,44 €</div>
<div class="t" style="top:542.69px;font-size:11px;line-height:13px;right:57px;font-style:italic;color:#202020;letter-spacing:-0.2px;">170,44 €</div>
<div class="t" style="top:542.69px;font-size:11px;line-height:13px;left:981px;font-style:italic;color:#202020;letter-spacing:-0.2px;">PCE</div>
<div class="a" style="left:344px;top:560px;width:1525px;height:1px;background:#d6d6d6"></div>
<div class="a" style="left:344px;top:583px;width:1525px;height:1px;background:#d6d6d6"></div>
<div class="a" style="left:344px;top:560px;width:1px;height:24px;background:#d6d6d6"></div>
<div class="a" style="left:413px;top:560px;width:2px;height:24px;background:#d6d6d6"></div>
<div class="a" style="left:542px;top:560px;width:1px;height:24px;background:#d6d6d6"></div>
<div class="a" style="left:866px;top:560px;width:1px;height:24px;background:#d6d6d6"></div>
<div class="a" style="left:975px;top:560px;width:1px;height:24px;background:#d6d6d6"></div>
<div class="a" style="left:1086px;top:560px;width:1px;height:24px;background:#d6d6d6"></div>
<div class="a" style="left:1197px;top:560px;width:1px;height:24px;background:#d6d6d6"></div>
<div class="a" style="left:1309px;top:560px;width:1px;height:24px;background:#d6d6d6"></div>
<div class="a" style="left:1421px;top:560px;width:1px;height:24px;background:#d6d6d6"></div>
<div class="a" style="left:1533px;top:560px;width:1px;height:24px;background:#d6d6d6"></div>
<div class="a" style="left:1645px;top:560px;width:1px;height:24px;background:#d6d6d6"></div>
<div class="a" style="left:1757px;top:560px;width:1px;height:24px;background:#d6d6d6"></div>
<svg class="a" style="left:328px;top:566px" width="14" height="13" viewBox="0 0 14 13"><path d="M7 0 L10.6 3.8 H8.1 V8.2 H5.9 V3.8 H3.4 Z" fill="#3f7fc2"/><path d="M0 6.5 H2 V9.5 H12 V6.5 H14 V13 H0 Z" fill="#e8c07e"/><rect x="2" y="8.6" width="10" height="1.1" fill="#a8a8a8"/></svg>
<div class="t" style="top:565.69px;font-size:11px;line-height:13px;left:351px;font-style:italic;color:#202020;letter-spacing:0.6px;">3.1.1.1*</div>
<div class="t" style="top:565.69px;font-size:11px;line-height:13px;left:548px;font-style:italic;color:#202020;letter-spacing:-0.2px;">manuelle Lohnminuten</div>
<div class="t" style="top:565.69px;font-size:11px;line-height:13px;right:951px;font-style:italic;color:#202020;letter-spacing:-0.2px;">1,00</div>
<div class="t" style="top:565.69px;font-size:11px;line-height:13px;right:729px;font-style:italic;color:#202020;letter-spacing:-0.2px;">30,00</div>
<div class="t" style="top:565.69px;font-size:11px;line-height:13px;right:617px;font-style:italic;color:#202020;letter-spacing:-0.2px;">0,00 %</div>
<div class="t" style="top:565.69px;font-size:11px;line-height:13px;right:505px;font-style:italic;color:#202020;letter-spacing:-0.2px;">100,00 %</div>
<div class="t" style="top:565.69px;font-size:11px;line-height:13px;right:169px;font-style:italic;color:#202020;letter-spacing:-0.2px;">30,00 €</div>
<div class="t" style="top:565.69px;font-size:11px;line-height:13px;right:57px;font-style:italic;color:#202020;letter-spacing:-0.2px;">30,00 €</div>
<div class="t" style="top:565.69px;font-size:11px;line-height:13px;left:981px;font-style:italic;color:#202020;letter-spacing:-0.2px;">STK</div>
<div class="a" style="left:326px;top:583px;width:1543px;height:1px;background:#d6d6d6"></div>
<div class="a" style="left:326px;top:606px;width:1543px;height:1px;background:#d6d6d6"></div>
<div class="a" style="left:326px;top:583px;width:1px;height:24px;background:#d6d6d6"></div>
<div class="a" style="left:413px;top:583px;width:2px;height:24px;background:#d6d6d6"></div>
<div class="a" style="left:542px;top:583px;width:1px;height:24px;background:#d6d6d6"></div>
<div class="a" style="left:866px;top:583px;width:1px;height:24px;background:#d6d6d6"></div>
<div class="a" style="left:975px;top:583px;width:1px;height:24px;background:#d6d6d6"></div>
<div class="a" style="left:1086px;top:583px;width:1px;height:24px;background:#d6d6d6"></div>
<div class="a" style="left:1197px;top:583px;width:1px;height:24px;background:#d6d6d6"></div>
<div class="a" style="left:1309px;top:583px;width:1px;height:24px;background:#d6d6d6"></div>
<div class="a" style="left:1421px;top:583px;width:1px;height:24px;background:#d6d6d6"></div>
<div class="a" style="left:1533px;top:583px;width:1px;height:24px;background:#d6d6d6"></div>
<div class="a" style="left:1645px;top:583px;width:1px;height:24px;background:#d6d6d6"></div>
<div class="a" style="left:1757px;top:583px;width:1px;height:24px;background:#d6d6d6"></div>
<svg class="a" style="left:311px;top:588px" width="15" height="15" viewBox="0 0 15 15"><rect x="0.5" y="0.5" width="11" height="13" fill="#fff" stroke="#555"/><rect x="2" y="2" width="8" height="1" fill="#a8a8a8"/><rect x="2" y="4" width="3" height="2" fill="#a8a8a8"/><rect x="6" y="4" width="4" height="1" fill="#a8a8a8"/><rect x="2" y="7" width="8" height="1" fill="#a8a8a8"/><rect x="2" y="9" width="6" height="1" fill="#a8a8a8"/><rect x="2" y="11" width="5" height="1" fill="#a8a8a8"/><circle cx="11" cy="11.2" r="3.8" fill="#3f7fc2"/><rect x="10.4" y="10.4" width="1.3" height="3" fill="#fff"/><rect x="10.4" y="8.6" width="1.3" height="1.2" fill="#fff"/></svg>
<div class="t" style="top:588.69px;font-size:11px;line-height:13px;left:333px;color:#202020;letter-spacing:0.6px;">3.1.1.a</div>
<div class="t" style="top:588.69px;font-size:11px;line-height:13px;left:420px;color:#202020;letter-spacing:0.3px;">37.0102</div>
<div class="t" style="top:588.69px;font-size:11px;line-height:13px;left:548px;color:#7d7d7d;letter-spacing:-0.2px;">Flachheizkörper aus Stahlblech, profiliert als einfache Platte (1f...</div>
<div class="a" style="left:326px;top:606px;width:1543px;height:1px;background:#d6d6d6"></div>
<div class="a" style="left:326px;top:629px;width:1543px;height:1px;background:#d6d6d6"></div>
<div class="a" style="left:326px;top:606px;width:1px;height:24px;background:#d6d6d6"></div>
<div class="a" style="left:413px;top:606px;width:2px;height:24px;background:#d6d6d6"></div>
<div class="a" style="left:542px;top:606px;width:1px;height:24px;background:#d6d6d6"></div>
<div class="a" style="left:866px;top:606px;width:1px;height:24px;background:#d6d6d6"></div>
<div class="a" style="left:975px;top:606px;width:1px;height:24px;background:#d6d6d6"></div>
<div class="a" style="left:1086px;top:606px;width:1px;height:24px;background:#d6d6d6"></div>
<div class="a" style="left:1197px;top:606px;width:1px;height:24px;background:#d6d6d6"></div>
<div class="a" style="left:1309px;top:606px;width:1px;height:24px;background:#d6d6d6"></div>
<div class="a" style="left:1421px;top:606px;width:1px;height:24px;background:#d6d6d6"></div>
<div class="a" style="left:1533px;top:606px;width:1px;height:24px;background:#d6d6d6"></div>
<div class="a" style="left:1645px;top:606px;width:1px;height:24px;background:#d6d6d6"></div>
<div class="a" style="left:1757px;top:606px;width:1px;height:24px;background:#d6d6d6"></div>
<svg class="a" style="left:310px;top:612px" width="14" height="13" viewBox="0 0 14 13"><path d="M7 0 L10.6 3.8 H8.1 V8.2 H5.9 V3.8 H3.4 Z" fill="#3f7fc2"/><path d="M0 6.5 H2 V9.5 H12 V6.5 H14 V13 H0 Z" fill="#e8c07e"/><rect x="2" y="8.6" width="10" height="1.1" fill="#a8a8a8"/></svg>
<div class="t" style="top:611.69px;font-size:11px;line-height:13px;left:333px;color:#202020;letter-spacing:0.6px;">3.1.2</div>
<div class="t" style="top:611.69px;font-size:11px;line-height:13px;left:420px;color:#202020;letter-spacing:0.3px;">37.0102A</div>
<div class="t" style="top:611.69px;font-size:11px;line-height:13px;left:548px;color:#202020;letter-spacing:-0.2px;">FlachHK 1f.Pl.500 Standard 400</div>
<div class="t" style="top:611.69px;font-size:11px;line-height:13px;right:951px;color:#202020;letter-spacing:-0.2px;">12,00</div>
<div class="t" style="top:611.69px;font-size:11px;line-height:13px;right:729px;color:#202020;letter-spacing:-0.2px;">24,00</div>
<div class="t" style="top:611.69px;font-size:11px;line-height:13px;right:617px;color:#202020;letter-spacing:-0.2px;">40,00 %</div>
<div class="t" style="top:611.69px;font-size:11px;line-height:13px;right:505px;color:#202020;letter-spacing:-0.2px;">100,00 %</div>
<div class="t" style="top:611.69px;font-size:11px;line-height:13px;right:393px;color:#202020;letter-spacing:-0.2px;">288,00 €</div>
<div class="t" style="top:611.69px;font-size:11px;line-height:13px;right:281px;color:#202020;letter-spacing:-0.2px;">8.400,00 €</div>
<div class="t" style="top:611.69px;font-size:11px;line-height:13px;right:169px;color:#202020;letter-spacing:-0.2px;">724,00 €</div>
<div class="t" style="top:611.69px;font-size:11px;line-height:13px;right:57px;color:#202020;letter-spacing:-0.2px;">8.688,00 €</div>
<div class="t" style="top:611.69px;font-size:11px;line-height:13px;left:981px;color:#202020;letter-spacing:-0.2px;">STK</div>
<div class="t" style="left:1893px;top:616px;font-size:11.5px;line-height:13px;font-weight:bold;color:#262626;transform:translate(-50%,-50%) rotate(-90deg);">SchnelleingabePreisanteile</div>
<div class="a" style="left:228px;top:780px;width:1px;height:263px;background:#acacac"></div>
<div class="a" style="left:228px;top:1042px;width:1682px;height:1px;background:#acacac"></div>
<div class="t" style="top:793.69px;font-size:11px;line-height:13px;left:239px;color:#262626;letter-spacing:-0.2px;">Artikel:</div>
<div class="a" style="left:308px;top:790px;width:403px;height:20px;background:#f0f0f0;box-sizing:border-box;border:1px solid #d6d6d6;"></div>
<svg class="a" style="left:701px;top:799px" width="7" height="4" viewBox="0 0 7 4"><path d="M0 0 H7 L3.5 3.5 Z" fill="#b5b5b5"/></svg>
<div class="t" style="top:793.69px;font-size:11px;line-height:13px;left:721px;color:#262626;letter-spacing:-0.2px;">Menge:</div>
<div class="a" style="left:790px;top:790px;width:308px;height:20px;background:#f0f0f0;box-sizing:border-box;border:1px solid #d6d6d6;"></div>
<div class="t" style="top:793.69px;font-size:11px;line-height:13px;right:845px;color:#262626;letter-spacing:-0.2px;">15,00</div>
<svg class="a" style="left:1086px;top:799px" width="7" height="4" viewBox="0 0 7 4"><path d="M0 0 H7 L3.5 3.5 Z" fill="#b5b5b5"/></svg>
<div class="t" style="top:793.69px;font-size:11px;line-height:13px;left:1108px;color:#262626;letter-spacing:-0.2px;">Einheit:</div>
<div class="a" style="left:1177px;top:790px;width:148px;height:20px;background:#f0f0f0;box-sizing:border-box;border:1px solid #d6d6d6;"></div>
<div class="t" style="top:793.69px;font-size:11px;line-height:13px;left:1182px;color:#262626;letter-spacing:-0.2px;">STK</div>
<svg class="a" style="left:1313px;top:799px" width="7" height="4" viewBox="0 0 7 4"><path d="M0 0 H7 L3.5 3.5 Z" fill="#b5b5b5"/></svg>
<div class="t" style="top:793.69px;font-size:11px;line-height:13px;left:1334px;color:#262626;letter-spacing:-0.2px;">Einheitspreis:</div>
<div class="a" style="left:1404px;top:790px;width:438px;height:20px;background:#ffffff;box-sizing:border-box;border:1px solid #a9a9a9;"></div>
<div class="t" style="top:793.69px;font-size:11px;line-height:13px;right:116px;color:#262626;letter-spacing:-0.2px;">200,44 €</div>
<svg class="a" style="left:1814px;top:793px" width="7" height="13" viewBox="0 0 7 13"><path d="M0.5 4 L3.5 1 L6.5 4 M0.5 9 L3.5 12 L6.5 9" stroke="#333" fill="none" stroke-width="1.2"/></svg>
<svg class="a" style="left:1830px;top:799px" width="7" height="4" viewBox="0 0 7 4"><path d="M0 0 H7 L3.5 3.5 Z" fill="#333"/></svg>
<svg class="a" style="left:1856px;top:785px" width="9" height="5" viewBox="0 0 9 5"><path d="M0 5 L4.5 0 L9 5 Z" fill="#555"/></svg>
<div class="a" style="left:1852px;top:797px;width:17px;height:215px;background:#dcdcdc;"></div>
<svg class="a" style="left:1856px;top:1030px" width="9" height="5" viewBox="0 0 9 5"><path d="M0 0 L4.5 5 L9 0 Z" fill="#555"/></svg>
<div class="a" style="left:1879px;top:933px;width:30px;height:37px;background:#dcdcdc;"></div>
<div class="a" style="left:1891px;top:945px;width:14px;height:14px;border-radius:50%;background:#3f7fc2"></div>
<svg class="a" style="left:1891px;top:983px" width="14" height="12" viewBox="0 0 14 12"><path d="M0 1 H5 L6.5 2.5 H13 V12 H0 Z" fill="#f3d6a0"/><path d="M0 12 L2 5 H14 L12.5 12 Z" fill="#e8c07e"/></svg>
<svg class="a" style="left:1891px;top:1017px" width="14" height="14" viewBox="0 0 14 14"><circle cx="7" cy="7" r="7" fill="#3f7fc2"/><rect x="6" y="6" width="2.2" height="5.5" fill="#fff"/><rect x="6" y="3" width="2.2" height="2" fill="#fff"/></svg>
<div class="a" style="left:239px;top:844px;width:1603px;height:199px;box-sizing:border-box;border:1px solid #bdbdbd;"></div>
<div class="a" style="left:240px;top:816px;width:59px;height:29px;background:#e3e3e3;box-sizing:border-box;border:1px solid #b4b4b4;"></div>
<div class="t" style="top:823.69px;font-size:11px;line-height:13px;left:250px;color:#262626;letter-spacing:-0.2px;">Position</div>
<div class="a" style="left:298px;top:815px;width:75px;height:31px;background:#f0f0f0;box-sizing:border-box;border:1px solid #b4b4b4;border-bottom:none;"></div>
<div class="t" style="top:823.69px;font-size:11px;line-height:13px;left:309px;color:#262626;letter-spacing:-0.2px;">Kalkulation</div>
<div class="a" style="left:372px;top:816px;width:65px;height:29px;background:#e3e3e3;box-sizing:border-box;border:1px solid #b4b4b4;"></div>
<div class="t" style="top:823.69px;font-size:11px;line-height:13px;left:382px;color:#262626;letter-spacing:-0.2px;">Langtext</div>
<div class="a" style="left:436px;top:816px;width:60px;height:29px;background:#e3e3e3;box-sizing:border-box;border:1px solid #b4b4b4;"></div>
<div class="t" style="top:823.69px;font-size:11px;line-height:13px;left:447px;color:#262626;letter-spacing:-0.2px;">Einkauf</div>
<div class="a" style="left:495px;top:816px;width:80px;height:29px;background:#e3e3e3;box-sizing:border-box;border:1px solid #b4b4b4;"></div>
<div class="t" style="top:823.69px;font-size:11px;line-height:13px;left:525px;color:#262626;letter-spacing:-0.2px;">Anlagen</div>
<svg class="a" style="left:507px;top:824px" width="13" height="13" viewBox="0 0 13 13"><rect x="1" y="0" width="2" height="13" fill="#666"/><rect x="0" y="6" width="12" height="7" fill="#666"/><rect x="5" y="3.5" width="2" height="3" fill="#666"/><rect x="9" y="3.5" width="2" height="3" fill="#666"/><rect x="4" y="9" width="1.5" height="1.5" fill="#f0f0f0"/><rect x="8" y="9" width="1.5" height="1.5" fill="#f0f0f0"/></svg>
<div class="a" style="left:250px;top:855px;width:529px;height:181px;background:#ffffff;box-sizing:border-box;border:1px solid #acacac;"></div>
<div class="a" style="left:251px;top:856px;width:527px;height:25px;background:#e3e3e3;"></div>
<div class="t" style="top:861.69px;font-size:11px;line-height:13px;left:262px;color:#262626;letter-spacing:-0.2px;">Aufteilung</div>
<div class="a" style="left:251px;top:881px;width:527px;height:24px;background:#f0f0f0;"></div>
<div class="a" style="left:251px;top:905px;width:527px;height:1px;background:#d6d6d6"></div>
<div class="a" style="left:275px;top:881px;width:1px;height:71px;background:#d6d6d6"></div>
<div class="a" style="left:434px;top:881px;width:1px;height:71px;background:#d6d6d6"></div>
<div class="a" style="left:548px;top:881px;width:1px;height:71px;background:#d6d6d6"></div>
<div class="a" style="left:662px;top:881px;width:1px;height:71px;background:#d6d6d6"></div>
<div class="t" style="top:886.69px;font-size:11px;line-height:13px;left:282px;color:#262626;letter-spacing:-0.2px;">Art</div>
<div class="t" style="top:886.69px;font-size:11px;line-height:13px;left:441px;color:#262626;letter-spacing:-0.2px;">EK</div>
<div class="t" style="top:886.69px;font-size:11px;line-height:13px;left:555px;color:#262626;letter-spacing:-0.2px;">Aufschlag</div>
<div class="t" style="top:886.69px;font-size:11px;line-height:13px;left:669px;color:#262626;letter-spacing:-0.2px;">VK</div>
<div class="a" style="left:276px;top:906px;width:158px;height:22px;background:#ffd800;"></div>
<div class="a" style="left:435px;top:906px;width:343px;height:22px;background:#e3e3e3;"></div>
<div class="a" style="left:548px;top:906px;width:1px;height:22px;background:#d6d6d6"></div>
<div class="a" style="left:662px;top:906px;width:1px;height:22px;background:#d6d6d6"></div>
<div class="a" style="left:275px;top:928px;width:503px;height:1px;background:#d6d6d6"></div>
<div class="a" style="left:275px;top:951px;width:503px;height:1px;background:#d6d6d6"></div>
<svg class="a" style="left:258px;top:913px" width="10" height="8" viewBox="0 0 10 8"><path d="M0 4 H8.5 M5 0.7 L8.5 4 L5 7.3" stroke="#3f7fc2" stroke-width="1.2" fill="none"/></svg>
<div class="t" style="top:910.69px;font-size:11px;line-height:13px;left:282px;color:#262626;letter-spacing:-0.2px;">Lohn</div>
<div class="t" style="top:910.69px;font-size:11px;line-height:13px;right:1377px;color:#262626;letter-spacing:-0.2px;">15,00 €</div>
<div class="t" style="top:910.69px;font-size:11px;line-height:13px;right:1264px;color:#262626;letter-spacing:-0.2px;">100,000 %</div>
<div class="t" style="top:909.84px;font-size:12px;line-height:14px;right:1148px;font-weight:bold;color:#262626;letter-spacing:0px;">30,00 €</div>
<div class="t" style="top:933.69px;font-size:11px;line-height:13px;left:282px;color:#262626;letter-spacing:-0.2px;">Material</div>
<div class="t" style="top:933.69px;font-size:11px;line-height:13px;right:1377px;color:#262626;letter-spacing:-0.2px;">121,74 €</div>
<div class="t" style="top:933.69px;font-size:11px;line-height:13px;right:1264px;color:#262626;letter-spacing:-0.2px;">40,003 %</div>
<div class="t" style="top:932.84px;font-size:12px;line-height:14px;right:1148px;font-weight:bold;color:#262626;letter-spacing:0px;">170,44 €</div>
<div class="a" style="left:799px;top:855px;width:1032px;height:181px;background:#f0f0f0;box-sizing:border-box;border:1px solid #acacac;"></div>
<div class="a" style="left:800px;top:856px;width:1030px;height:25px;background:#e3e3e3;"></div>
<div class="t" style="top:861.69px;font-size:11px;line-height:13px;left:810px;color:#262626;letter-spacing:-0.2px;">Kalkulation Details</div>
<div class="a" style="left:801px;top:914px;width:307px;height:22px;background:#e3e3e3;"></div>
<div class="t" style="top:894.69px;font-size:11px;line-height:13px;left:810px;color:#262626;letter-spacing:-0.2px;">EK Sonstiges:</div>
<div class="a" style="left:918px;top:891px;width:187px;height:20px;background:#f0f0f0;box-sizing:border-box;border:1px solid #d6d6d6;"></div>
<div class="t" style="top:894.69px;font-size:11px;line-height:13px;right:822px;color:#262626;letter-spacing:-0.2px;">121,74 €</div>
<div class="t" style="top:918.69px;font-size:11px;line-height:13px;left:810px;color:#262626;letter-spacing:-0.2px;">Aufschlag Sonstiges :</div>
<div class="a" style="left:918px;top:915px;width:187px;height:20px;background:#ffffff;box-sizing:border-box;border:1px solid #a9a9a9;"></div>
<div class="t" style="top:918.69px;font-size:11px;line-height:13px;right:822px;color:#262626;letter-spacing:-0.2px;">40,00 %</div>
<div class="t" style="top:942.69px;font-size:11px;line-height:13px;left:810px;color:#262626;letter-spacing:-0.2px;">VK Sonstiges:</div>
<div class="a" style="left:918px;top:939px;width:187px;height:20px;background:#ffffff;box-sizing:border-box;border:1px solid #a9a9a9;"></div>
<div class="t" style="top:942.69px;font-size:11px;line-height:13px;right:822px;color:#262626;letter-spacing:-0.2px;">170,44 €</div>
<div class="a" style="left:918px;top:965px;width:16px;height:16px;background:#ffffff;box-sizing:border-box;border:1px solid #a9a9a9;"></div>
<div class="t" style="top:966.69px;font-size:11px;line-height:13px;left:937px;color:#262626;letter-spacing:-0.2px;">Fix Sonstiges</div>
<div class="t" style="top:990.69px;font-size:11px;line-height:13px;left:810px;color:#262626;letter-spacing:-0.2px;">EK Minute:</div>
<div class="a" style="left:918px;top:987px;width:187px;height:20px;background:#f0f0f0;box-sizing:border-box;border:1px solid #d6d6d6;"></div>
<div class="t" style="top:990.69px;font-size:11px;line-height:13px;right:822px;color:#262626;letter-spacing:-0.2px;">0,50 €</div>
<div class="t" style="top:1014.69px;font-size:11px;line-height:13px;left:810px;color:#262626;letter-spacing:-0.2px;">Minuten Basis:</div>
<div class="a" style="left:918px;top:1011px;width:187px;height:20px;background:#ffd800;box-sizing:border-box;border:1px solid #c8c8c8;"></div>
<div class="t" style="top:1014.69px;font-size:11px;line-height:13px;right:822px;color:#262626;letter-spacing:-0.2px;">30,00</div>
<div class="t" style="top:894.69px;font-size:11px;line-height:13px;left:1115px;color:#262626;letter-spacing:-0.2px;">EK Lohn:</div>
<div class="a" style="left:1223px;top:891px;width:216px;height:20px;background:#f0f0f0;box-sizing:border-box;border:1px solid #d6d6d6;"></div>
<div class="t" style="top:894.69px;font-size:11px;line-height:13px;right:488px;color:#262626;letter-spacing:-0.2px;">15,00 €</div>
<div class="t" style="top:918.69px;font-size:11px;line-height:13px;left:1115px;color:#262626;letter-spacing:-0.2px;">Aufschlag Lohn:</div>
<div class="a" style="left:1223px;top:915px;width:216px;height:20px;background:#ffffff;box-sizing:border-box;border:1px solid #a9a9a9;"></div>
<div class="t" style="top:918.69px;font-size:11px;line-height:13px;right:488px;color:#262626;letter-spacing:-0.2px;">100,00 %</div>
<div class="t" style="top:942.69px;font-size:11px;line-height:13px;left:1115px;color:#262626;letter-spacing:-0.2px;">VK Lohn:</div>
<div class="a" style="left:1223px;top:939px;width:216px;height:20px;background:#ffffff;box-sizing:border-box;border:1px solid #a9a9a9;"></div>
<div class="t" style="top:942.69px;font-size:11px;line-height:13px;right:488px;color:#262626;letter-spacing:-0.2px;">30,00 €</div>
<div class="a" style="left:1223px;top:965px;width:16px;height:16px;background:#ffffff;box-sizing:border-box;border:1px solid #a9a9a9;"></div>
<div class="t" style="top:966.69px;font-size:11px;line-height:13px;left:1242px;color:#262626;letter-spacing:-0.2px;">Fix Lohn</div>
<div class="t" style="top:990.69px;font-size:11px;line-height:13px;left:1115px;color:#262626;letter-spacing:-0.2px;">VK Minute:</div>
<div class="a" style="left:1223px;top:987px;width:216px;height:20px;background:#f0f0f0;box-sizing:border-box;border:1px solid #d6d6d6;"></div>
<div class="t" style="top:990.69px;font-size:11px;line-height:13px;right:488px;color:#262626;letter-spacing:-0.2px;">1,00 €</div>
<div class="t" style="top:1014.69px;font-size:11px;line-height:13px;left:1115px;color:#262626;letter-spacing:-0.2px;">Zeitfaktor:</div>
<div class="a" style="left:1223px;top:1011px;width:216px;height:20px;background:#f0f0f0;box-sizing:border-box;border:1px solid #d6d6d6;"></div>
<div class="t" style="top:1014.69px;font-size:11px;line-height:13px;right:488px;color:#262626;letter-spacing:-0.2px;">1,00</div>
<div class="t" style="top:894.69px;font-size:11px;line-height:13px;left:1448px;color:#262626;letter-spacing:-0.2px;">EK Ergebnis:</div>
<div class="a" style="left:1557px;top:891px;width:263px;height:20px;background:#f0f0f0;box-sizing:border-box;border:1px solid #d6d6d6;"></div>
<div class="t" style="top:894.69px;font-size:11px;line-height:13px;right:107px;color:#262626;letter-spacing:-0.2px;">136,74 €</div>
<div class="t" style="top:918.69px;font-size:11px;line-height:13px;left:1448px;color:#262626;letter-spacing:-0.2px;">Aufschlag Gesamt:</div>
<div class="a" style="left:1557px;top:915px;width:263px;height:20px;background:#f0f0f0;box-sizing:border-box;border:1px solid #d6d6d6;"></div>
<div class="t" style="top:918.69px;font-size:11px;line-height:13px;right:107px;color:#262626;letter-spacing:-0.2px;">46,58 %</div>
<div class="t" style="top:942.69px;font-size:11px;line-height:13px;left:1448px;color:#262626;letter-spacing:-0.2px;">VK Ergebnis :</div>
<div class="a" style="left:1557px;top:939px;width:263px;height:20px;background:#f0f0f0;box-sizing:border-box;border:1px solid #d6d6d6;"></div>
<div class="t" style="top:941.84px;font-size:12px;line-height:14px;right:107px;font-weight:bold;color:#262626;letter-spacing:0px;">200,44 €</div>
<div class="a" style="left:1557px;top:965px;width:16px;height:16px;background:#ffffff;box-sizing:border-box;border:1px solid #a9a9a9;"></div>
<div class="t" style="top:966.69px;font-size:11px;line-height:13px;left:1576px;color:#262626;letter-spacing:-0.2px;">Fixpreis</div>
<div class="t" style="top:990.69px;font-size:11px;line-height:13px;left:1448px;color:#262626;letter-spacing:-0.2px;">Zuschlag F+VB:</div>
<div class="a" style="left:1557px;top:987px;width:263px;height:20px;background:#7fffd4;box-sizing:border-box;border:1px solid #b0b0b0;"></div>
<div class="t" style="top:990.69px;font-size:11px;line-height:13px;right:107px;color:#262626;letter-spacing:-0.2px;">100,00 %</div>
<div class="t" style="top:1014.69px;font-size:11px;line-height:13px;left:1448px;color:#262626;letter-spacing:-0.2px;">Minuten Ergebnis:</div>
<div class="a" style="left:1557px;top:1011px;width:263px;height:20px;background:#ffd800;box-sizing:border-box;border:1px solid #c8c8c8;"></div>
<div class="t" style="top:1014.69px;font-size:11px;line-height:13px;right:107px;color:#262626;letter-spacing:-0.2px;">30,00</div>
<div class="a" style="left:1069px;top:918px;width:1px;height:14px;background:#111111"></div></body></html>
